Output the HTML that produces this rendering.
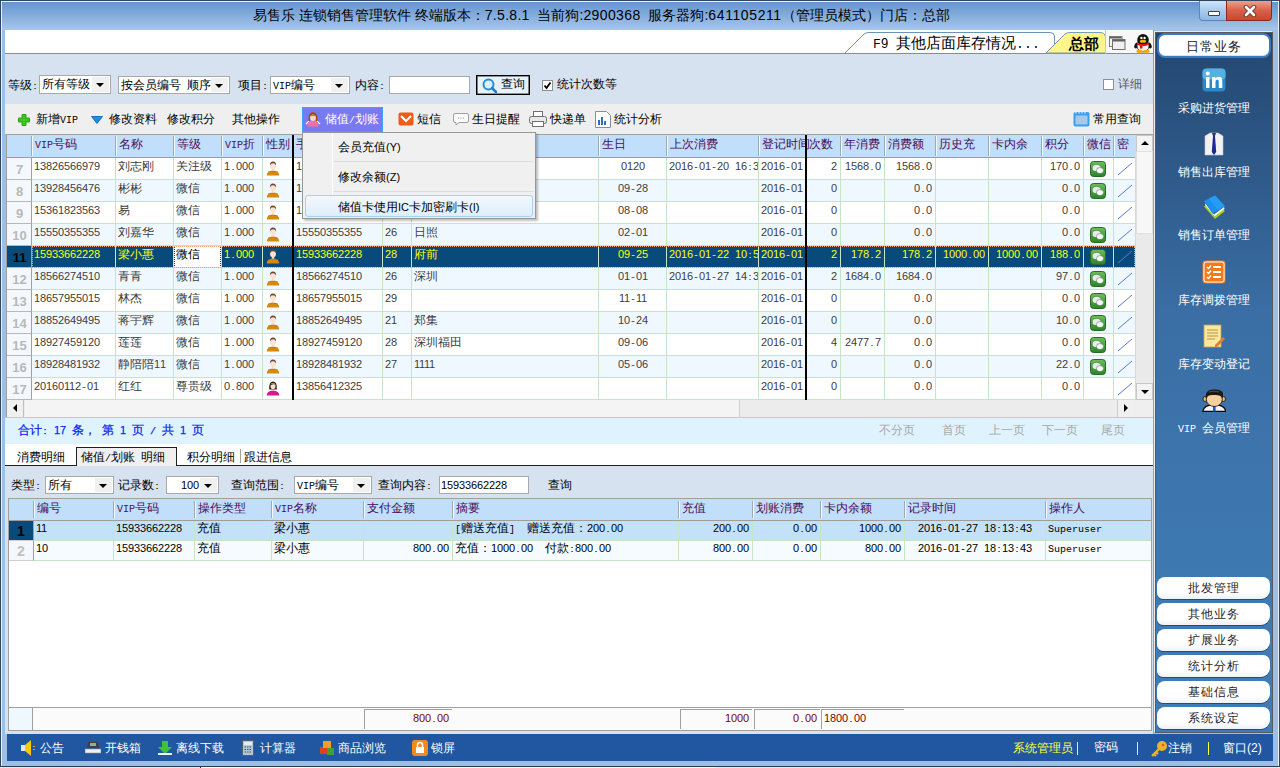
<!DOCTYPE html><html><head><meta charset="utf-8"><style>
@font-face{font-family:"SM";src:local("Liberation Mono");unicode-range:U+0000-002F,U+003A-00FF;size-adjust:83.4%;}
@font-face{font-family:"SM";src:local("Liberation Sans");unicode-range:U+0030-0039;size-adjust:89.9%;}
*{margin:0;padding:0;box-sizing:border-box}
html,body{width:1280px;height:768px;overflow:hidden;background:#9dc0e6}
body{position:relative;font-family:"SM","Liberation Sans",sans-serif;font-size:12px;color:#000}
div{position:absolute}
.t{white-space:nowrap;line-height:14px;height:14px}
.sans{font-family:"Liberation Sans",sans-serif}
</style></head><body><div style="left:0;top:0;width:1280px;height:768px;background:#9dbfe5;border:1px solid #2f4560"></div>
<div style="left:1px;top:1px;width:1278px;height:766px;border:1px solid #e8f0fa;border-bottom-color:#c8dcf0"></div>
<div style="left:2px;top:2px;width:1276px;height:28px;background:linear-gradient(#6495cf,#a7c6ea)"></div>
<div class="t" style="left:253px;top:7px;font-family:'Liberation Sans',sans-serif;font-size:14px;line-height:16px;height:16px;color:#000">易售乐 连锁销售管理软件 终端版本：<span style="letter-spacing:.3px">7.5.8.1</span>&nbsp;&nbsp;当前狗:<span style="letter-spacing:.4px">2900368</span>&nbsp;&nbsp;服务器狗:<span style="letter-spacing:.6px">641105211</span>（管理员模式）门店：总部</div>
<div style="left:1199px;top:1px;width:28px;height:20px;background:linear-gradient(#cfe3f8,#a9cbee 50%,#8fb8e6);border:1px solid #5f86b4;border-top:none;border-radius:0 0 0 4px"><div style="left:8px;top:10px;width:12px;height:5px;background:#fff;border:1px solid #404040;border-radius:1px"></div></div>
<div style="left:1226px;top:1px;width:46px;height:20px;background:linear-gradient(#e9a28f,#d8604a 50%,#c94830);border:1px solid #8b2a1c;border-top:none;border-radius:0 0 4px 0"><svg style="position:absolute;left:16px;top:4px" width="14" height="12" viewBox="0 0 14 12"><path d="M3 2 L11 10 M11 2 L3 10" stroke="#5a2a20" stroke-width="4.4" stroke-linecap="round"/><path d="M3 2 L11 10 M11 2 L3 10" stroke="#fff" stroke-width="2.8" stroke-linecap="round"/></svg></div>
<div style="left:5px;top:30px;width:1149px;height:24px;background:#fff;border-bottom:1px solid #8c8c8c"></div>
<svg style="position:absolute;left:840px;top:30px" width="320" height="24" viewBox="0 0 320 24">
<path d="M5 23 L24 4 Q26 2.5 29 2.5 L210 2.5 Q214 2.5 214.5 6 L214.5 23" fill="#fff" stroke="#6c93b6" stroke-width="1"/>
<path d="M206 23 L225 4 Q227 2.5 230 2.5 L260 2.5 Q265 2.5 265.5 7 L265.5 23 Z" fill="#fff689" stroke="#7a9ab8" stroke-width="1"/>
<line x1="265.5" y1="0" x2="265.5" y2="23" stroke="#d0d0d0"/>
<line x1="313.5" y1="0" x2="313.5" y2="23" stroke="#a0a0a0"/>
</svg>
<div class="t" style="left:873px;top:38px;font-size:15px;line-height:14px">F9 其他店面库存情况...</div>
<div class="t" style="left:1069px;top:37px;font-family:'Liberation Sans',sans-serif;font-size:15px;line-height:14px;"><b>总部</b></div>
<div style="left:1105px;top:30px;width:49px;height:24px;background:#f8f8f8;border-right:1px solid #909090;border-left:1px solid #b8c8d8;border-bottom:1px solid #8c8c8c"></div>
<svg style="position:absolute;left:1108px;top:35px" width="18" height="16" viewBox="0 0 18 16">
<rect x="1.5" y="1.5" width="12.5" height="10" fill="#f6f6f6" stroke="#7a7a7a" stroke-width="1"/>
<rect x="4.5" y="4.5" width="12.5" height="10" fill="#f0f0f0" stroke="#707070" stroke-width="1"/>
<rect x="5" y="5" width="12" height="1.5" fill="#606060"/>
<rect x="2" y="2" width="11.5" height="1.5" fill="#606060"/>
</svg>
<svg style="position:absolute;left:1133px;top:33px" width="20" height="20" viewBox="0 0 20 20">
<ellipse cx="3.5" cy="12.5" rx="2" ry="3" fill="#111" transform="rotate(25 3.5 12.5)"/>
<ellipse cx="16.5" cy="12.5" rx="2" ry="3" fill="#111" transform="rotate(-25 16.5 12.5)"/>
<ellipse cx="10" cy="13" rx="6" ry="6" fill="#f4f4f4" stroke="#202020" stroke-width=".8"/>
<ellipse cx="10" cy="7" rx="5.8" ry="6" fill="#111"/>
<circle cx="8.4" cy="5" r="1.2" fill="#fff"/><circle cx="11.6" cy="5" r="1.2" fill="#fff"/>
<ellipse cx="10" cy="8.2" rx="3.2" ry="1.5" fill="#f8b800"/>
<path d="M3.8 9.5 Q10 12.5 16.2 9.5 L16.2 11.5 Q10 14.5 3.8 11.5Z" fill="#e81010"/>
<rect x="7" y="11.5" width="2.5" height="4" fill="#e81010"/>
<ellipse cx="6.5" cy="18.3" rx="3.2" ry="1.6" fill="#f0a800"/>
<ellipse cx="13.5" cy="18.3" rx="3.2" ry="1.6" fill="#f0a800"/>
</svg>
<div style="left:5px;top:54px;width:1149px;height:50px;background:#d6e2f0"></div>
<div style="left:5px;top:104px;width:1149px;height:30px;background:#efefef"></div>
<div class="t" style="left:8px;top:80px;">等级:</div>
<div style="left:39px;top:75px;width:72px;height:19px;background:#fff;border:1px solid #a9a9a9"></div>
<div style="left:92px;top:77px;width:17px;height:15px;background:#f0f0f0"><div style="left:4px;top:6px;width:0;height:0;border-left:4px solid transparent;border-right:4px solid transparent;border-top:4px solid #000"></div></div>
<div class="t" style="left:42px;top:79px;">所有等级</div>
<div style="left:118px;top:76px;width:112px;height:18px;background:#fff;border:1px solid #a9a9a9"></div>
<div style="left:211px;top:78px;width:17px;height:14px;background:#f0f0f0"><div style="left:4px;top:6px;width:0;height:0;border-left:4px solid transparent;border-right:4px solid transparent;border-top:4px solid #000"></div></div>
<div class="t" style="left:121px;top:80px;">按会员编号 顺序</div>
<div class="t" style="left:238px;top:80px;">项目:</div>
<div style="left:270px;top:76px;width:80px;height:18px;background:#fff;border:1px solid #a9a9a9"></div>
<div style="left:331px;top:78px;width:17px;height:14px;background:#f0f0f0"><div style="left:4px;top:6px;width:0;height:0;border-left:4px solid transparent;border-right:4px solid transparent;border-top:4px solid #000"></div></div>
<div class="t" style="left:273px;top:80px;">VIP编号</div>
<div class="t" style="left:355px;top:80px;">内容:</div>
<div style="left:389px;top:76px;width:81px;height:18px;background:#fff;border:1px solid #a9a9a9"></div>
<div style="left:476px;top:75px;width:54px;height:20px;background:#e6f3fc;border:1px solid #000;box-shadow:inset 0 0 0 .6px #303030"><svg style="position:absolute;left:5px;top:2px" width="16" height="16" viewBox="0 0 16 16"><circle cx="6.5" cy="6.5" r="5" fill="#d8f0fc" stroke="#2a8ed0" stroke-width="2"/><path d="M10 10 L14 14" stroke="#2a7ec0" stroke-width="2.5" stroke-linecap="round"/></svg></div>
<div class="t" style="left:501px;top:79px;">查询</div>
<div style="left:542px;top:80px;width:11px;height:11px;background:#fff;border:1px solid #8f8f8f"><svg style="position:absolute;left:0px;top:0px" width="9" height="9" viewBox="0 0 9 9"><path d="M1.5 4.5 L3.5 7 L7.5 1.5" stroke="#000" stroke-width="1.8" fill="none"/></svg></div>
<div class="t" style="left:557px;top:79px;">统计次数等</div>
<div style="left:1103px;top:79px;width:11px;height:11px;background:#fff;border:1px solid #8f8f8f"></div>
<div class="t" style="left:1118px;top:79px;color:#555">详细</div>
<svg style="position:absolute;left:18px;top:114px" width="12" height="12" viewBox="0 0 12 12"><path d="M4 0.5h4v3.5h3.5v4h-3.5v3.5h-4v-3.5h-3.5v-4h3.5z" fill="#3ec81e" stroke="#1c8a10" stroke-width="0.8"/></svg>
<div class="t" style="left:36px;top:114px;">新增VIP</div>
<svg style="position:absolute;left:91px;top:116px" width="12" height="8" viewBox="0 0 12 8"><path d="M0.5 0.5 L11.5 0.5 L6 7.5Z" fill="#1a8ee8" stroke="#0a5aa8" stroke-width="0.8"/></svg>
<div class="t" style="left:109px;top:114px;">修改资料</div>
<div class="t" style="left:167px;top:114px;">修改积分</div>
<div class="t" style="left:232px;top:114px;">其他操作</div>
<div style="left:302px;top:107px;width:81px;height:25px;background:#7a7af0;border:1px solid #3ea2f8"></div>
<svg style="position:absolute;left:305px;top:111px" width="16" height="16" viewBox="0 0 16 16">
<path d="M1 13 L4.5 9.5 M15 13 L11.5 9.5" stroke="#fff" stroke-width="1.2"/>
<path d="M2.5 15.5 Q2 9.5 8 9.5 Q14 9.5 13.5 15.5Z" fill="#f070a0"/>
<path d="M3.5 10 Q3 1.2 8 1.2 Q13 1.2 12.5 10 L11 10 L11 6 Q8 4 5 6 L5 10Z" fill="#9a4a10"/>
<ellipse cx="8" cy="6.8" rx="2.9" ry="3.2" fill="#fbd8b8"/>
<path d="M5 5.2 Q8 2.6 11 5.2 Q8 4.2 5 5.2Z" fill="#9a4a10"/>
</svg>
<div class="t" style="left:325px;top:114px;color:#fff">储值/划账</div>
<svg style="position:absolute;left:398px;top:112px" width="16" height="14" viewBox="0 0 16 14"><rect x="0.5" y="0.5" width="15" height="13" rx="2" fill="#f05a1a"/><path d="M3 4 L8 9 L13 4" stroke="#fff" stroke-width="2" fill="none"/></svg>
<div class="t" style="left:417px;top:114px;">短信</div>
<svg style="position:absolute;left:453px;top:112px" width="16" height="14" viewBox="0 0 16 14"><path d="M2 1.5h12q1.5 0 1.5 1.5v6q0 1.5-1.5 1.5h-8l-3 2.5v-2.5h-1q-1.5 0-1.5-1.5v-6q0-1.5 1.5-1.5z" fill="#fafafa" stroke="#a0a0a0"/><circle cx="5.5" cy="6" r=".6" fill="#888"/><circle cx="8" cy="6" r=".6" fill="#888"/><circle cx="10.5" cy="6" r=".6" fill="#888"/></svg>
<div class="t" style="left:472px;top:114px;">生日提醒</div>
<svg style="position:absolute;left:529px;top:111px" width="18" height="16" viewBox="0 0 18 16"><rect x="4.5" y="0.5" width="9" height="5" fill="#fff" stroke="#707070"/><rect x="0.5" y="5.5" width="17" height="7" rx="2" fill="#e8e8e8" stroke="#707070"/><rect x="3.5" y="10.5" width="11" height="5" fill="#fff" stroke="#707070"/></svg>
<div class="t" style="left:550px;top:114px;">快递单</div>
<svg style="position:absolute;left:595px;top:111px" width="16" height="17" viewBox="0 0 16 17"><path d="M0.5 0.5h11l4 4v12h-15z" fill="#fff" stroke="#8090a0"/><rect x="3" y="9" width="2" height="5" fill="#2a70c0"/><rect x="6" y="6" width="2" height="8" fill="#2a70c0"/><rect x="9" y="10" width="2" height="4" fill="#2a70c0"/></svg>
<div class="t" style="left:614px;top:114px;">统计分析</div>
<svg style="position:absolute;left:1073px;top:111px" width="17" height="16" viewBox="0 0 17 16"><rect x="0.5" y="1" width="16" height="14.5" rx="2" fill="#3aa0f0"/><rect x="2.5" y="4.5" width="12" height="9" fill="#a8c8e8"/><path d="M3 0.5v2M6 0.5v2M9 0.5v2M12 0.5v2" stroke="#fff"/></svg>
<div class="t" style="left:1093px;top:114px;">常用查询</div>
<div style="left:6px;top:134px;width:1148px;height:283px;background:#fff;border:1px solid #a0a0a0;border-right:none"></div>
<div style="left:7px;top:135px;width:1128px;height:23px;background:#c1dffa;border-bottom:1px solid #a09c98"></div>
<div style="left:31px;top:136px;width:2px;height:20px;border-left:1px solid #a0a8b0;border-right:1px solid #f4faff"></div>
<div style="left:115px;top:136px;width:2px;height:20px;border-left:1px solid #a0a8b0;border-right:1px solid #f4faff"></div>
<div class="t" style="left:35px;top:139px;color:#4a0c5a">VIP号码</div>
<div style="left:173px;top:136px;width:2px;height:20px;border-left:1px solid #a0a8b0;border-right:1px solid #f4faff"></div>
<div class="t" style="left:119px;top:139px;color:#4a0c5a">名称</div>
<div style="left:221px;top:136px;width:2px;height:20px;border-left:1px solid #a0a8b0;border-right:1px solid #f4faff"></div>
<div class="t" style="left:177px;top:139px;color:#4a0c5a">等级</div>
<div style="left:262px;top:136px;width:2px;height:20px;border-left:1px solid #a0a8b0;border-right:1px solid #f4faff"></div>
<div class="t" style="left:225px;top:139px;color:#4a0c5a">VIP折</div>
<div class="t" style="left:266px;top:139px;color:#4a0c5a">性别</div>
<div style="left:382px;top:136px;width:2px;height:20px;border-left:1px solid #a0a8b0;border-right:1px solid #f4faff"></div>
<div class="t" style="left:296px;top:139px;color:#4a0c5a">手机</div>
<div style="left:411px;top:136px;width:2px;height:20px;border-left:1px solid #a0a8b0;border-right:1px solid #f4faff"></div>
<div class="t" style="left:386px;top:139px;color:#4a0c5a">年龄</div>
<div style="left:598px;top:136px;width:2px;height:20px;border-left:1px solid #a0a8b0;border-right:1px solid #f4faff"></div>
<div class="t" style="left:415px;top:139px;color:#4a0c5a">地址</div>
<div style="left:666px;top:136px;width:2px;height:20px;border-left:1px solid #a0a8b0;border-right:1px solid #f4faff"></div>
<div class="t" style="left:602px;top:139px;color:#4a0c5a">生日</div>
<div style="left:758px;top:136px;width:2px;height:20px;border-left:1px solid #a0a8b0;border-right:1px solid #f4faff"></div>
<div class="t" style="left:670px;top:139px;color:#4a0c5a">上次消费</div>
<div class="t" style="left:762px;top:139px;color:#4a0c5a">登记时间</div>
<div style="left:840px;top:136px;width:2px;height:20px;border-left:1px solid #a0a8b0;border-right:1px solid #f4faff"></div>
<div class="t" style="left:809px;top:139px;color:#4a0c5a">次数</div>
<div style="left:884px;top:136px;width:2px;height:20px;border-left:1px solid #a0a8b0;border-right:1px solid #f4faff"></div>
<div class="t" style="left:844px;top:139px;color:#4a0c5a">年消费</div>
<div style="left:935px;top:136px;width:2px;height:20px;border-left:1px solid #a0a8b0;border-right:1px solid #f4faff"></div>
<div class="t" style="left:888px;top:139px;color:#4a0c5a">消费额</div>
<div style="left:988px;top:136px;width:2px;height:20px;border-left:1px solid #a0a8b0;border-right:1px solid #f4faff"></div>
<div class="t" style="left:939px;top:139px;color:#4a0c5a">历史充</div>
<div style="left:1041px;top:136px;width:2px;height:20px;border-left:1px solid #a0a8b0;border-right:1px solid #f4faff"></div>
<div class="t" style="left:992px;top:139px;color:#4a0c5a">卡内余</div>
<div style="left:1083px;top:136px;width:2px;height:20px;border-left:1px solid #a0a8b0;border-right:1px solid #f4faff"></div>
<div class="t" style="left:1045px;top:139px;color:#4a0c5a">积分</div>
<div style="left:1113px;top:136px;width:2px;height:20px;border-left:1px solid #a0a8b0;border-right:1px solid #f4faff"></div>
<div class="t" style="left:1087px;top:139px;color:#4a0c5a">微信</div>
<div style="left:1135px;top:136px;width:2px;height:20px;border-left:1px solid #a0a8b0;border-right:1px solid #f4faff"></div>
<div class="t" style="left:1117px;top:139px;color:#4a0c5a">密</div>
<div style="left:7px;top:158px;width:25px;height:22px;background:#f4f8fc;border-bottom:1px solid #b8b8b8;border-right:1px solid #a0a0a0"></div>
<div class="t" style="left:7px;top:163px;width:25px;text-align:center;font-family:'Liberation Sans',sans-serif;font-size:13px;line-height:14px;color:#b8b8b8"><b>7</b></div>
<div style="left:32px;top:158px;width:1103px;height:22px;background:#ffffff"></div>
<div style="left:115px;top:158px;width:1px;height:22px;background:#c6e4c6"></div>
<div class="t" style="left:34px;top:161px;width:81px;overflow:hidden;color:#3c3c3c;">13826566979</div>
<div style="left:173px;top:158px;width:1px;height:22px;background:#c6e4c6"></div>
<div class="t" style="left:118px;top:161px;width:55px;overflow:hidden;color:#3c3c3c;">刘志刚</div>
<div style="left:221px;top:158px;width:1px;height:22px;background:#c6e4c6"></div>
<div class="t" style="left:176px;top:161px;width:45px;overflow:hidden;color:#3c3c3c;">关注级</div>
<div style="left:262px;top:158px;width:1px;height:22px;background:#c6e4c6"></div>
<div class="t" style="left:224px;top:161px;width:38px;overflow:hidden;color:#3c3c3c;">1.000</div>
<div style="left:266px;top:160px;width:14px;height:16px"><svg width="14" height="16" viewBox="0 0 14 16"><path d="M0.8 15.6 Q0.6 10.6 7 10.4 Q13.4 10.6 13.2 15.6Z" fill="#d48a0c"/><path d="M2 12 Q7 10.2 12 12" stroke="#b87008" stroke-width=".6" fill="none"/><rect x="5.8" y="8.5" width="2.4" height="2.2" fill="#f2d8c4"/><ellipse cx="7" cy="5.6" rx="3" ry="3.6" fill="#f8e4d4"/><path d="M3.9 5.4 Q3.8 1.6 7 1.6 Q10.2 1.6 10.1 5.4 Q9.2 3.3 7 3.3 Q4.8 3.3 3.9 5.4z" fill="#704830"/></svg></div>
<div style="left:382px;top:158px;width:1px;height:22px;background:#c6e4c6"></div>
<div class="t" style="left:296px;top:161px;width:86px;overflow:hidden;color:#3c3c3c;">1</div>
<div style="left:411px;top:158px;width:1px;height:22px;background:#c6e4c6"></div>
<div style="left:598px;top:158px;width:1px;height:22px;background:#c6e4c6"></div>
<div style="left:666px;top:158px;width:1px;height:22px;background:#c6e4c6"></div>
<div class="t" style="left:599px;top:161px;width:67px;text-align:center;color:#3c3c3c;">0120</div>
<div style="left:758px;top:158px;width:1px;height:22px;background:#c6e4c6"></div>
<div class="t" style="left:669px;top:161px;width:89px;overflow:hidden;color:#3c3c3c;">2016-01-20 16:3</div>
<div class="t" style="left:761px;top:161px;width:44px;overflow:hidden;color:#3c3c3c;">2016-01</div>
<div style="left:840px;top:158px;width:1px;height:22px;background:#c6e4c6"></div>
<div class="t" style="left:808px;top:161px;width:29px;text-align:right;color:#3c3c3c;overflow:hidden">2</div>
<div style="left:884px;top:158px;width:1px;height:22px;background:#c6e4c6"></div>
<div class="t" style="left:842px;top:161px;width:39px;text-align:right;color:#3c3c3c;overflow:hidden">1568.0</div>
<div style="left:935px;top:158px;width:1px;height:22px;background:#c6e4c6"></div>
<div class="t" style="left:886px;top:161px;width:46px;text-align:right;color:#3c3c3c;overflow:hidden">1568.0</div>
<div style="left:988px;top:158px;width:1px;height:22px;background:#c6e4c6"></div>
<div style="left:1041px;top:158px;width:1px;height:22px;background:#c6e4c6"></div>
<div style="left:1083px;top:158px;width:1px;height:22px;background:#c6e4c6"></div>
<div class="t" style="left:1043px;top:161px;width:37px;text-align:right;color:#3c3c3c;overflow:hidden">170.0</div>
<div style="left:1113px;top:158px;width:1px;height:22px;background:#c6e4c6"></div>
<div style="left:1090px;top:161px;width:16px;height:16px"><svg width="16" height="16" viewBox="0 0 16 16"><defs><linearGradient id="wg" x1="0" y1="0" x2="0" y2="1"><stop offset="0" stop-color="#6cc05c"/><stop offset="1" stop-color="#2a8428"/></linearGradient></defs><rect x=".5" y=".5" width="15" height="15" rx="3" fill="url(#wg)" stroke="#2a6a26" stroke-width="1"/><ellipse cx="6.6" cy="7" rx="4.4" ry="3.6" fill="#e8ece8" stroke="#3a6a38" stroke-width=".5"/><ellipse cx="10" cy="9.6" rx="3.6" ry="3" fill="#f8f8f8" stroke="#3a6a38" stroke-width=".5"/></svg></div>
<div style="left:1135px;top:158px;width:1px;height:22px;background:#c6e4c6"></div>
<svg style="position:absolute;left:1117px;top:162px" width="16" height="14"><path d="M1 13 L15 1" stroke="#5a7ad8" stroke-width="1"/></svg>
<div style="left:32px;top:179px;width:1103px;height:1px;background:#c6e4c6"></div>
<div style="left:7px;top:180px;width:25px;height:22px;background:#f4f8fc;border-bottom:1px solid #b8b8b8;border-right:1px solid #a0a0a0"></div>
<div class="t" style="left:7px;top:185px;width:25px;text-align:center;font-family:'Liberation Sans',sans-serif;font-size:13px;line-height:14px;color:#b8b8b8"><b>8</b></div>
<div style="left:32px;top:180px;width:1103px;height:22px;background:#f0f8ff"></div>
<div style="left:115px;top:180px;width:1px;height:22px;background:#c6e4c6"></div>
<div class="t" style="left:34px;top:183px;width:81px;overflow:hidden;color:#3c3c3c;">13928456476</div>
<div style="left:173px;top:180px;width:1px;height:22px;background:#c6e4c6"></div>
<div class="t" style="left:118px;top:183px;width:55px;overflow:hidden;color:#3c3c3c;">彬彬</div>
<div style="left:221px;top:180px;width:1px;height:22px;background:#c6e4c6"></div>
<div class="t" style="left:176px;top:183px;width:45px;overflow:hidden;color:#3c3c3c;">微信</div>
<div style="left:262px;top:180px;width:1px;height:22px;background:#c6e4c6"></div>
<div class="t" style="left:224px;top:183px;width:38px;overflow:hidden;color:#3c3c3c;">1.000</div>
<div style="left:266px;top:182px;width:14px;height:16px"><svg width="14" height="16" viewBox="0 0 14 16"><path d="M0.8 15.6 Q0.6 10.6 7 10.4 Q13.4 10.6 13.2 15.6Z" fill="#d48a0c"/><path d="M2 12 Q7 10.2 12 12" stroke="#b87008" stroke-width=".6" fill="none"/><rect x="5.8" y="8.5" width="2.4" height="2.2" fill="#f2d8c4"/><ellipse cx="7" cy="5.6" rx="3" ry="3.6" fill="#f8e4d4"/><path d="M3.9 5.4 Q3.8 1.6 7 1.6 Q10.2 1.6 10.1 5.4 Q9.2 3.3 7 3.3 Q4.8 3.3 3.9 5.4z" fill="#704830"/></svg></div>
<div style="left:382px;top:180px;width:1px;height:22px;background:#c6e4c6"></div>
<div class="t" style="left:296px;top:183px;width:86px;overflow:hidden;color:#3c3c3c;">1</div>
<div style="left:411px;top:180px;width:1px;height:22px;background:#c6e4c6"></div>
<div style="left:598px;top:180px;width:1px;height:22px;background:#c6e4c6"></div>
<div style="left:666px;top:180px;width:1px;height:22px;background:#c6e4c6"></div>
<div class="t" style="left:599px;top:183px;width:67px;text-align:center;color:#3c3c3c;">09-28</div>
<div style="left:758px;top:180px;width:1px;height:22px;background:#c6e4c6"></div>
<div class="t" style="left:761px;top:183px;width:44px;overflow:hidden;color:#3c3c3c;">2016-01</div>
<div style="left:840px;top:180px;width:1px;height:22px;background:#c6e4c6"></div>
<div class="t" style="left:808px;top:183px;width:29px;text-align:right;color:#3c3c3c;overflow:hidden">0</div>
<div style="left:884px;top:180px;width:1px;height:22px;background:#c6e4c6"></div>
<div style="left:935px;top:180px;width:1px;height:22px;background:#c6e4c6"></div>
<div class="t" style="left:886px;top:183px;width:46px;text-align:right;color:#3c3c3c;overflow:hidden">0.0</div>
<div style="left:988px;top:180px;width:1px;height:22px;background:#c6e4c6"></div>
<div style="left:1041px;top:180px;width:1px;height:22px;background:#c6e4c6"></div>
<div style="left:1083px;top:180px;width:1px;height:22px;background:#c6e4c6"></div>
<div class="t" style="left:1043px;top:183px;width:37px;text-align:right;color:#3c3c3c;overflow:hidden">0.0</div>
<div style="left:1113px;top:180px;width:1px;height:22px;background:#c6e4c6"></div>
<div style="left:1090px;top:183px;width:16px;height:16px"><svg width="16" height="16" viewBox="0 0 16 16"><defs><linearGradient id="wg" x1="0" y1="0" x2="0" y2="1"><stop offset="0" stop-color="#6cc05c"/><stop offset="1" stop-color="#2a8428"/></linearGradient></defs><rect x=".5" y=".5" width="15" height="15" rx="3" fill="url(#wg)" stroke="#2a6a26" stroke-width="1"/><ellipse cx="6.6" cy="7" rx="4.4" ry="3.6" fill="#e8ece8" stroke="#3a6a38" stroke-width=".5"/><ellipse cx="10" cy="9.6" rx="3.6" ry="3" fill="#f8f8f8" stroke="#3a6a38" stroke-width=".5"/></svg></div>
<div style="left:1135px;top:180px;width:1px;height:22px;background:#c6e4c6"></div>
<svg style="position:absolute;left:1117px;top:184px" width="16" height="14"><path d="M1 13 L15 1" stroke="#5a7ad8" stroke-width="1"/></svg>
<div style="left:32px;top:201px;width:1103px;height:1px;background:#c6e4c6"></div>
<div style="left:7px;top:202px;width:25px;height:22px;background:#f4f8fc;border-bottom:1px solid #b8b8b8;border-right:1px solid #a0a0a0"></div>
<div class="t" style="left:7px;top:207px;width:25px;text-align:center;font-family:'Liberation Sans',sans-serif;font-size:13px;line-height:14px;color:#b8b8b8"><b>9</b></div>
<div style="left:32px;top:202px;width:1103px;height:22px;background:#ffffff"></div>
<div style="left:115px;top:202px;width:1px;height:22px;background:#c6e4c6"></div>
<div class="t" style="left:34px;top:205px;width:81px;overflow:hidden;color:#3c3c3c;">15361823563</div>
<div style="left:173px;top:202px;width:1px;height:22px;background:#c6e4c6"></div>
<div class="t" style="left:118px;top:205px;width:55px;overflow:hidden;color:#3c3c3c;">易</div>
<div style="left:221px;top:202px;width:1px;height:22px;background:#c6e4c6"></div>
<div class="t" style="left:176px;top:205px;width:45px;overflow:hidden;color:#3c3c3c;">微信</div>
<div style="left:262px;top:202px;width:1px;height:22px;background:#c6e4c6"></div>
<div class="t" style="left:224px;top:205px;width:38px;overflow:hidden;color:#3c3c3c;">1.000</div>
<div style="left:266px;top:204px;width:14px;height:16px"><svg width="14" height="16" viewBox="0 0 14 16"><path d="M0.8 15.6 Q0.6 10.6 7 10.4 Q13.4 10.6 13.2 15.6Z" fill="#d48a0c"/><path d="M2 12 Q7 10.2 12 12" stroke="#b87008" stroke-width=".6" fill="none"/><rect x="5.8" y="8.5" width="2.4" height="2.2" fill="#f2d8c4"/><ellipse cx="7" cy="5.6" rx="3" ry="3.6" fill="#f8e4d4"/><path d="M3.9 5.4 Q3.8 1.6 7 1.6 Q10.2 1.6 10.1 5.4 Q9.2 3.3 7 3.3 Q4.8 3.3 3.9 5.4z" fill="#704830"/></svg></div>
<div style="left:382px;top:202px;width:1px;height:22px;background:#c6e4c6"></div>
<div class="t" style="left:296px;top:205px;width:86px;overflow:hidden;color:#3c3c3c;">1</div>
<div style="left:411px;top:202px;width:1px;height:22px;background:#c6e4c6"></div>
<div style="left:598px;top:202px;width:1px;height:22px;background:#c6e4c6"></div>
<div style="left:666px;top:202px;width:1px;height:22px;background:#c6e4c6"></div>
<div class="t" style="left:599px;top:205px;width:67px;text-align:center;color:#3c3c3c;">08-08</div>
<div style="left:758px;top:202px;width:1px;height:22px;background:#c6e4c6"></div>
<div class="t" style="left:761px;top:205px;width:44px;overflow:hidden;color:#3c3c3c;">2016-01</div>
<div style="left:840px;top:202px;width:1px;height:22px;background:#c6e4c6"></div>
<div class="t" style="left:808px;top:205px;width:29px;text-align:right;color:#3c3c3c;overflow:hidden">0</div>
<div style="left:884px;top:202px;width:1px;height:22px;background:#c6e4c6"></div>
<div style="left:935px;top:202px;width:1px;height:22px;background:#c6e4c6"></div>
<div class="t" style="left:886px;top:205px;width:46px;text-align:right;color:#3c3c3c;overflow:hidden">0.0</div>
<div style="left:988px;top:202px;width:1px;height:22px;background:#c6e4c6"></div>
<div style="left:1041px;top:202px;width:1px;height:22px;background:#c6e4c6"></div>
<div style="left:1083px;top:202px;width:1px;height:22px;background:#c6e4c6"></div>
<div class="t" style="left:1043px;top:205px;width:37px;text-align:right;color:#3c3c3c;overflow:hidden">0.0</div>
<div style="left:1113px;top:202px;width:1px;height:22px;background:#c6e4c6"></div>
<div style="left:1135px;top:202px;width:1px;height:22px;background:#c6e4c6"></div>
<svg style="position:absolute;left:1117px;top:206px" width="16" height="14"><path d="M1 13 L15 1" stroke="#5a7ad8" stroke-width="1"/></svg>
<div style="left:32px;top:223px;width:1103px;height:1px;background:#c6e4c6"></div>
<div style="left:7px;top:224px;width:25px;height:22px;background:#f4f8fc;border-bottom:1px solid #b8b8b8;border-right:1px solid #a0a0a0"></div>
<div class="t" style="left:7px;top:229px;width:25px;text-align:center;font-family:'Liberation Sans',sans-serif;font-size:13px;line-height:14px;color:#b8b8b8"><b>10</b></div>
<div style="left:32px;top:224px;width:1103px;height:22px;background:#f0f8ff"></div>
<div style="left:115px;top:224px;width:1px;height:22px;background:#c6e4c6"></div>
<div class="t" style="left:34px;top:227px;width:81px;overflow:hidden;color:#3c3c3c;">15550355355</div>
<div style="left:173px;top:224px;width:1px;height:22px;background:#c6e4c6"></div>
<div class="t" style="left:118px;top:227px;width:55px;overflow:hidden;color:#3c3c3c;">刘嘉华</div>
<div style="left:221px;top:224px;width:1px;height:22px;background:#c6e4c6"></div>
<div class="t" style="left:176px;top:227px;width:45px;overflow:hidden;color:#3c3c3c;">微信</div>
<div style="left:262px;top:224px;width:1px;height:22px;background:#c6e4c6"></div>
<div class="t" style="left:224px;top:227px;width:38px;overflow:hidden;color:#3c3c3c;">1.000</div>
<div style="left:266px;top:226px;width:14px;height:16px"><svg width="14" height="16" viewBox="0 0 14 16"><path d="M0.8 15.6 Q0.6 10.6 7 10.4 Q13.4 10.6 13.2 15.6Z" fill="#d48a0c"/><path d="M2 12 Q7 10.2 12 12" stroke="#b87008" stroke-width=".6" fill="none"/><rect x="5.8" y="8.5" width="2.4" height="2.2" fill="#f2d8c4"/><ellipse cx="7" cy="5.6" rx="3" ry="3.6" fill="#f8e4d4"/><path d="M3.9 5.4 Q3.8 1.6 7 1.6 Q10.2 1.6 10.1 5.4 Q9.2 3.3 7 3.3 Q4.8 3.3 3.9 5.4z" fill="#704830"/></svg></div>
<div style="left:382px;top:224px;width:1px;height:22px;background:#c6e4c6"></div>
<div class="t" style="left:296px;top:227px;width:86px;overflow:hidden;color:#3c3c3c;">15550355355</div>
<div style="left:411px;top:224px;width:1px;height:22px;background:#c6e4c6"></div>
<div class="t" style="left:385px;top:227px;width:26px;overflow:hidden;color:#3c3c3c;">26</div>
<div style="left:598px;top:224px;width:1px;height:22px;background:#c6e4c6"></div>
<div class="t" style="left:414px;top:227px;width:184px;overflow:hidden;color:#3c3c3c;">日照</div>
<div style="left:666px;top:224px;width:1px;height:22px;background:#c6e4c6"></div>
<div class="t" style="left:599px;top:227px;width:67px;text-align:center;color:#3c3c3c;">02-01</div>
<div style="left:758px;top:224px;width:1px;height:22px;background:#c6e4c6"></div>
<div class="t" style="left:761px;top:227px;width:44px;overflow:hidden;color:#3c3c3c;">2016-01</div>
<div style="left:840px;top:224px;width:1px;height:22px;background:#c6e4c6"></div>
<div class="t" style="left:808px;top:227px;width:29px;text-align:right;color:#3c3c3c;overflow:hidden">0</div>
<div style="left:884px;top:224px;width:1px;height:22px;background:#c6e4c6"></div>
<div style="left:935px;top:224px;width:1px;height:22px;background:#c6e4c6"></div>
<div class="t" style="left:886px;top:227px;width:46px;text-align:right;color:#3c3c3c;overflow:hidden">0.0</div>
<div style="left:988px;top:224px;width:1px;height:22px;background:#c6e4c6"></div>
<div style="left:1041px;top:224px;width:1px;height:22px;background:#c6e4c6"></div>
<div style="left:1083px;top:224px;width:1px;height:22px;background:#c6e4c6"></div>
<div class="t" style="left:1043px;top:227px;width:37px;text-align:right;color:#3c3c3c;overflow:hidden">0.0</div>
<div style="left:1113px;top:224px;width:1px;height:22px;background:#c6e4c6"></div>
<div style="left:1090px;top:227px;width:16px;height:16px"><svg width="16" height="16" viewBox="0 0 16 16"><defs><linearGradient id="wg" x1="0" y1="0" x2="0" y2="1"><stop offset="0" stop-color="#6cc05c"/><stop offset="1" stop-color="#2a8428"/></linearGradient></defs><rect x=".5" y=".5" width="15" height="15" rx="3" fill="url(#wg)" stroke="#2a6a26" stroke-width="1"/><ellipse cx="6.6" cy="7" rx="4.4" ry="3.6" fill="#e8ece8" stroke="#3a6a38" stroke-width=".5"/><ellipse cx="10" cy="9.6" rx="3.6" ry="3" fill="#f8f8f8" stroke="#3a6a38" stroke-width=".5"/></svg></div>
<div style="left:1135px;top:224px;width:1px;height:22px;background:#c6e4c6"></div>
<svg style="position:absolute;left:1117px;top:228px" width="16" height="14"><path d="M1 13 L15 1" stroke="#5a7ad8" stroke-width="1"/></svg>
<div style="left:32px;top:245px;width:1103px;height:1px;background:#c6e4c6"></div>
<div style="left:7px;top:246px;width:25px;height:22px;background:#084b7a;border-bottom:1px solid #b8b8b8;border-right:1px solid #a0a0a0"></div>
<div class="t" style="left:7px;top:251px;width:25px;text-align:center;font-family:'Liberation Sans',sans-serif;font-size:13px;line-height:14px;color:#000"><b>11</b></div>
<div style="left:32px;top:246px;width:1103px;height:22px;background:#084b7a"></div>
<div style="left:115px;top:246px;width:1px;height:22px;background:#c6e4c6"></div>
<div class="t" style="left:34px;top:249px;width:81px;overflow:hidden;color:#ffff00;">15933662228</div>
<div style="left:173px;top:246px;width:1px;height:22px;background:#c6e4c6"></div>
<div class="t" style="left:118px;top:249px;width:55px;overflow:hidden;color:#ffff00;">梁小惠</div>
<div style="left:174px;top:246px;width:47px;height:22px;background:#fff;border:1px dotted #404040"></div>
<div style="left:221px;top:246px;width:1px;height:22px;background:#c6e4c6"></div>
<div class="t" style="left:176px;top:249px;width:45px;overflow:hidden;color:#000;">微信</div>
<div style="left:262px;top:246px;width:1px;height:22px;background:#c6e4c6"></div>
<div class="t" style="left:224px;top:249px;width:38px;overflow:hidden;color:#ffff00;">1.000</div>
<div style="left:266px;top:248px;width:14px;height:16px"><svg width="14" height="16" viewBox="0 0 14 16"><path d="M0.8 15.6 Q0.6 10.6 7 10.4 Q13.4 10.6 13.2 15.6Z" fill="#d48a0c"/><path d="M2 12 Q7 10.2 12 12" stroke="#b87008" stroke-width=".6" fill="none"/><rect x="5.8" y="8.5" width="2.4" height="2.2" fill="#f2d8c4"/><ellipse cx="7" cy="5.6" rx="3" ry="3.6" fill="#f8e4d4"/><path d="M3.9 5.4 Q3.8 1.6 7 1.6 Q10.2 1.6 10.1 5.4 Q9.2 3.3 7 3.3 Q4.8 3.3 3.9 5.4z" fill="#704830"/></svg></div>
<div style="left:382px;top:246px;width:1px;height:22px;background:#c6e4c6"></div>
<div class="t" style="left:296px;top:249px;width:86px;overflow:hidden;color:#ffff00;">15933662228</div>
<div style="left:411px;top:246px;width:1px;height:22px;background:#c6e4c6"></div>
<div class="t" style="left:385px;top:249px;width:26px;overflow:hidden;color:#ffff00;">28</div>
<div style="left:598px;top:246px;width:1px;height:22px;background:#c6e4c6"></div>
<div class="t" style="left:414px;top:249px;width:184px;overflow:hidden;color:#ffff00;">府前</div>
<div style="left:666px;top:246px;width:1px;height:22px;background:#c6e4c6"></div>
<div class="t" style="left:599px;top:249px;width:67px;text-align:center;color:#ffff00;">09-25</div>
<div style="left:758px;top:246px;width:1px;height:22px;background:#c6e4c6"></div>
<div class="t" style="left:669px;top:249px;width:89px;overflow:hidden;color:#ffff00;">2016-01-22 10:5</div>
<div class="t" style="left:761px;top:249px;width:44px;overflow:hidden;color:#ffff00;">2016-01</div>
<div style="left:840px;top:246px;width:1px;height:22px;background:#c6e4c6"></div>
<div class="t" style="left:808px;top:249px;width:29px;text-align:right;color:#ffff00;overflow:hidden">2</div>
<div style="left:884px;top:246px;width:1px;height:22px;background:#c6e4c6"></div>
<div class="t" style="left:842px;top:249px;width:39px;text-align:right;color:#ffff00;overflow:hidden">178.2</div>
<div style="left:935px;top:246px;width:1px;height:22px;background:#c6e4c6"></div>
<div class="t" style="left:886px;top:249px;width:46px;text-align:right;color:#ffff00;overflow:hidden">178.2</div>
<div style="left:988px;top:246px;width:1px;height:22px;background:#c6e4c6"></div>
<div class="t" style="left:937px;top:249px;width:48px;text-align:right;color:#ffff00;overflow:hidden">1000.00</div>
<div style="left:1041px;top:246px;width:1px;height:22px;background:#c6e4c6"></div>
<div class="t" style="left:990px;top:249px;width:48px;text-align:right;color:#ffff00;overflow:hidden">1000.00</div>
<div style="left:1083px;top:246px;width:1px;height:22px;background:#c6e4c6"></div>
<div class="t" style="left:1043px;top:249px;width:37px;text-align:right;color:#ffff00;overflow:hidden">188.0</div>
<div style="left:1113px;top:246px;width:1px;height:22px;background:#c6e4c6"></div>
<div style="left:1090px;top:249px;width:16px;height:16px"><svg width="16" height="16" viewBox="0 0 16 16"><defs><linearGradient id="wg" x1="0" y1="0" x2="0" y2="1"><stop offset="0" stop-color="#6cc05c"/><stop offset="1" stop-color="#2a8428"/></linearGradient></defs><rect x=".5" y=".5" width="15" height="15" rx="3" fill="url(#wg)" stroke="#2a6a26" stroke-width="1"/><ellipse cx="6.6" cy="7" rx="4.4" ry="3.6" fill="#e8ece8" stroke="#3a6a38" stroke-width=".5"/><ellipse cx="10" cy="9.6" rx="3.6" ry="3" fill="#f8f8f8" stroke="#3a6a38" stroke-width=".5"/></svg></div>
<div style="left:1135px;top:246px;width:1px;height:22px;background:#c6e4c6"></div>
<svg style="position:absolute;left:1117px;top:250px" width="16" height="14"><path d="M1 13 L15 1" stroke="#5a7ad8" stroke-width="1"/></svg>
<div style="left:32px;top:267px;width:1103px;height:1px;background:#c6e4c6"></div>
<div style="left:32px;top:246px;width:1103px;height:22px;border:1px dotted #f0a070"></div>
<div style="left:7px;top:268px;width:25px;height:22px;background:#f4f8fc;border-bottom:1px solid #b8b8b8;border-right:1px solid #a0a0a0"></div>
<div class="t" style="left:7px;top:273px;width:25px;text-align:center;font-family:'Liberation Sans',sans-serif;font-size:13px;line-height:14px;color:#b8b8b8"><b>12</b></div>
<div style="left:32px;top:268px;width:1103px;height:22px;background:#f0f8ff"></div>
<div style="left:115px;top:268px;width:1px;height:22px;background:#c6e4c6"></div>
<div class="t" style="left:34px;top:271px;width:81px;overflow:hidden;color:#3c3c3c;">18566274510</div>
<div style="left:173px;top:268px;width:1px;height:22px;background:#c6e4c6"></div>
<div class="t" style="left:118px;top:271px;width:55px;overflow:hidden;color:#3c3c3c;">青青</div>
<div style="left:221px;top:268px;width:1px;height:22px;background:#c6e4c6"></div>
<div class="t" style="left:176px;top:271px;width:45px;overflow:hidden;color:#3c3c3c;">微信</div>
<div style="left:262px;top:268px;width:1px;height:22px;background:#c6e4c6"></div>
<div class="t" style="left:224px;top:271px;width:38px;overflow:hidden;color:#3c3c3c;">1.000</div>
<div style="left:266px;top:270px;width:14px;height:16px"><svg width="14" height="16" viewBox="0 0 14 16"><path d="M0.8 15.6 Q0.6 10.6 7 10.4 Q13.4 10.6 13.2 15.6Z" fill="#d48a0c"/><path d="M2 12 Q7 10.2 12 12" stroke="#b87008" stroke-width=".6" fill="none"/><rect x="5.8" y="8.5" width="2.4" height="2.2" fill="#f2d8c4"/><ellipse cx="7" cy="5.6" rx="3" ry="3.6" fill="#f8e4d4"/><path d="M3.9 5.4 Q3.8 1.6 7 1.6 Q10.2 1.6 10.1 5.4 Q9.2 3.3 7 3.3 Q4.8 3.3 3.9 5.4z" fill="#704830"/></svg></div>
<div style="left:382px;top:268px;width:1px;height:22px;background:#c6e4c6"></div>
<div class="t" style="left:296px;top:271px;width:86px;overflow:hidden;color:#3c3c3c;">18566274510</div>
<div style="left:411px;top:268px;width:1px;height:22px;background:#c6e4c6"></div>
<div class="t" style="left:385px;top:271px;width:26px;overflow:hidden;color:#3c3c3c;">26</div>
<div style="left:598px;top:268px;width:1px;height:22px;background:#c6e4c6"></div>
<div class="t" style="left:414px;top:271px;width:184px;overflow:hidden;color:#3c3c3c;">深圳</div>
<div style="left:666px;top:268px;width:1px;height:22px;background:#c6e4c6"></div>
<div class="t" style="left:599px;top:271px;width:67px;text-align:center;color:#3c3c3c;">01-01</div>
<div style="left:758px;top:268px;width:1px;height:22px;background:#c6e4c6"></div>
<div class="t" style="left:669px;top:271px;width:89px;overflow:hidden;color:#3c3c3c;">2016-01-27 14:3</div>
<div class="t" style="left:761px;top:271px;width:44px;overflow:hidden;color:#3c3c3c;">2016-01</div>
<div style="left:840px;top:268px;width:1px;height:22px;background:#c6e4c6"></div>
<div class="t" style="left:808px;top:271px;width:29px;text-align:right;color:#3c3c3c;overflow:hidden">2</div>
<div style="left:884px;top:268px;width:1px;height:22px;background:#c6e4c6"></div>
<div class="t" style="left:842px;top:271px;width:39px;text-align:right;color:#3c3c3c;overflow:hidden">1684.0</div>
<div style="left:935px;top:268px;width:1px;height:22px;background:#c6e4c6"></div>
<div class="t" style="left:886px;top:271px;width:46px;text-align:right;color:#3c3c3c;overflow:hidden">1684.0</div>
<div style="left:988px;top:268px;width:1px;height:22px;background:#c6e4c6"></div>
<div style="left:1041px;top:268px;width:1px;height:22px;background:#c6e4c6"></div>
<div style="left:1083px;top:268px;width:1px;height:22px;background:#c6e4c6"></div>
<div class="t" style="left:1043px;top:271px;width:37px;text-align:right;color:#3c3c3c;overflow:hidden">97.0</div>
<div style="left:1113px;top:268px;width:1px;height:22px;background:#c6e4c6"></div>
<div style="left:1090px;top:271px;width:16px;height:16px"><svg width="16" height="16" viewBox="0 0 16 16"><defs><linearGradient id="wg" x1="0" y1="0" x2="0" y2="1"><stop offset="0" stop-color="#6cc05c"/><stop offset="1" stop-color="#2a8428"/></linearGradient></defs><rect x=".5" y=".5" width="15" height="15" rx="3" fill="url(#wg)" stroke="#2a6a26" stroke-width="1"/><ellipse cx="6.6" cy="7" rx="4.4" ry="3.6" fill="#e8ece8" stroke="#3a6a38" stroke-width=".5"/><ellipse cx="10" cy="9.6" rx="3.6" ry="3" fill="#f8f8f8" stroke="#3a6a38" stroke-width=".5"/></svg></div>
<div style="left:1135px;top:268px;width:1px;height:22px;background:#c6e4c6"></div>
<svg style="position:absolute;left:1117px;top:272px" width="16" height="14"><path d="M1 13 L15 1" stroke="#5a7ad8" stroke-width="1"/></svg>
<div style="left:32px;top:289px;width:1103px;height:1px;background:#c6e4c6"></div>
<div style="left:7px;top:290px;width:25px;height:22px;background:#f4f8fc;border-bottom:1px solid #b8b8b8;border-right:1px solid #a0a0a0"></div>
<div class="t" style="left:7px;top:295px;width:25px;text-align:center;font-family:'Liberation Sans',sans-serif;font-size:13px;line-height:14px;color:#b8b8b8"><b>13</b></div>
<div style="left:32px;top:290px;width:1103px;height:22px;background:#ffffff"></div>
<div style="left:115px;top:290px;width:1px;height:22px;background:#c6e4c6"></div>
<div class="t" style="left:34px;top:293px;width:81px;overflow:hidden;color:#3c3c3c;">18657955015</div>
<div style="left:173px;top:290px;width:1px;height:22px;background:#c6e4c6"></div>
<div class="t" style="left:118px;top:293px;width:55px;overflow:hidden;color:#3c3c3c;">林杰</div>
<div style="left:221px;top:290px;width:1px;height:22px;background:#c6e4c6"></div>
<div class="t" style="left:176px;top:293px;width:45px;overflow:hidden;color:#3c3c3c;">微信</div>
<div style="left:262px;top:290px;width:1px;height:22px;background:#c6e4c6"></div>
<div class="t" style="left:224px;top:293px;width:38px;overflow:hidden;color:#3c3c3c;">1.000</div>
<div style="left:266px;top:292px;width:14px;height:16px"><svg width="14" height="16" viewBox="0 0 14 16"><path d="M0.8 15.6 Q0.6 10.6 7 10.4 Q13.4 10.6 13.2 15.6Z" fill="#d48a0c"/><path d="M2 12 Q7 10.2 12 12" stroke="#b87008" stroke-width=".6" fill="none"/><rect x="5.8" y="8.5" width="2.4" height="2.2" fill="#f2d8c4"/><ellipse cx="7" cy="5.6" rx="3" ry="3.6" fill="#f8e4d4"/><path d="M3.9 5.4 Q3.8 1.6 7 1.6 Q10.2 1.6 10.1 5.4 Q9.2 3.3 7 3.3 Q4.8 3.3 3.9 5.4z" fill="#704830"/></svg></div>
<div style="left:382px;top:290px;width:1px;height:22px;background:#c6e4c6"></div>
<div class="t" style="left:296px;top:293px;width:86px;overflow:hidden;color:#3c3c3c;">18657955015</div>
<div style="left:411px;top:290px;width:1px;height:22px;background:#c6e4c6"></div>
<div class="t" style="left:385px;top:293px;width:26px;overflow:hidden;color:#3c3c3c;">29</div>
<div style="left:598px;top:290px;width:1px;height:22px;background:#c6e4c6"></div>
<div style="left:666px;top:290px;width:1px;height:22px;background:#c6e4c6"></div>
<div class="t" style="left:599px;top:293px;width:67px;text-align:center;color:#3c3c3c;">11-11</div>
<div style="left:758px;top:290px;width:1px;height:22px;background:#c6e4c6"></div>
<div class="t" style="left:761px;top:293px;width:44px;overflow:hidden;color:#3c3c3c;">2016-01</div>
<div style="left:840px;top:290px;width:1px;height:22px;background:#c6e4c6"></div>
<div class="t" style="left:808px;top:293px;width:29px;text-align:right;color:#3c3c3c;overflow:hidden">0</div>
<div style="left:884px;top:290px;width:1px;height:22px;background:#c6e4c6"></div>
<div style="left:935px;top:290px;width:1px;height:22px;background:#c6e4c6"></div>
<div class="t" style="left:886px;top:293px;width:46px;text-align:right;color:#3c3c3c;overflow:hidden">0.0</div>
<div style="left:988px;top:290px;width:1px;height:22px;background:#c6e4c6"></div>
<div style="left:1041px;top:290px;width:1px;height:22px;background:#c6e4c6"></div>
<div style="left:1083px;top:290px;width:1px;height:22px;background:#c6e4c6"></div>
<div class="t" style="left:1043px;top:293px;width:37px;text-align:right;color:#3c3c3c;overflow:hidden">0.0</div>
<div style="left:1113px;top:290px;width:1px;height:22px;background:#c6e4c6"></div>
<div style="left:1090px;top:293px;width:16px;height:16px"><svg width="16" height="16" viewBox="0 0 16 16"><defs><linearGradient id="wg" x1="0" y1="0" x2="0" y2="1"><stop offset="0" stop-color="#6cc05c"/><stop offset="1" stop-color="#2a8428"/></linearGradient></defs><rect x=".5" y=".5" width="15" height="15" rx="3" fill="url(#wg)" stroke="#2a6a26" stroke-width="1"/><ellipse cx="6.6" cy="7" rx="4.4" ry="3.6" fill="#e8ece8" stroke="#3a6a38" stroke-width=".5"/><ellipse cx="10" cy="9.6" rx="3.6" ry="3" fill="#f8f8f8" stroke="#3a6a38" stroke-width=".5"/></svg></div>
<div style="left:1135px;top:290px;width:1px;height:22px;background:#c6e4c6"></div>
<svg style="position:absolute;left:1117px;top:294px" width="16" height="14"><path d="M1 13 L15 1" stroke="#5a7ad8" stroke-width="1"/></svg>
<div style="left:32px;top:311px;width:1103px;height:1px;background:#c6e4c6"></div>
<div style="left:7px;top:312px;width:25px;height:22px;background:#f4f8fc;border-bottom:1px solid #b8b8b8;border-right:1px solid #a0a0a0"></div>
<div class="t" style="left:7px;top:317px;width:25px;text-align:center;font-family:'Liberation Sans',sans-serif;font-size:13px;line-height:14px;color:#b8b8b8"><b>14</b></div>
<div style="left:32px;top:312px;width:1103px;height:22px;background:#f0f8ff"></div>
<div style="left:115px;top:312px;width:1px;height:22px;background:#c6e4c6"></div>
<div class="t" style="left:34px;top:315px;width:81px;overflow:hidden;color:#3c3c3c;">18852649495</div>
<div style="left:173px;top:312px;width:1px;height:22px;background:#c6e4c6"></div>
<div class="t" style="left:118px;top:315px;width:55px;overflow:hidden;color:#3c3c3c;">蒋宇辉</div>
<div style="left:221px;top:312px;width:1px;height:22px;background:#c6e4c6"></div>
<div class="t" style="left:176px;top:315px;width:45px;overflow:hidden;color:#3c3c3c;">微信</div>
<div style="left:262px;top:312px;width:1px;height:22px;background:#c6e4c6"></div>
<div class="t" style="left:224px;top:315px;width:38px;overflow:hidden;color:#3c3c3c;">1.000</div>
<div style="left:266px;top:314px;width:14px;height:16px"><svg width="14" height="16" viewBox="0 0 14 16"><path d="M0.8 15.6 Q0.6 10.6 7 10.4 Q13.4 10.6 13.2 15.6Z" fill="#d48a0c"/><path d="M2 12 Q7 10.2 12 12" stroke="#b87008" stroke-width=".6" fill="none"/><rect x="5.8" y="8.5" width="2.4" height="2.2" fill="#f2d8c4"/><ellipse cx="7" cy="5.6" rx="3" ry="3.6" fill="#f8e4d4"/><path d="M3.9 5.4 Q3.8 1.6 7 1.6 Q10.2 1.6 10.1 5.4 Q9.2 3.3 7 3.3 Q4.8 3.3 3.9 5.4z" fill="#704830"/></svg></div>
<div style="left:382px;top:312px;width:1px;height:22px;background:#c6e4c6"></div>
<div class="t" style="left:296px;top:315px;width:86px;overflow:hidden;color:#3c3c3c;">18852649495</div>
<div style="left:411px;top:312px;width:1px;height:22px;background:#c6e4c6"></div>
<div class="t" style="left:385px;top:315px;width:26px;overflow:hidden;color:#3c3c3c;">21</div>
<div style="left:598px;top:312px;width:1px;height:22px;background:#c6e4c6"></div>
<div class="t" style="left:414px;top:315px;width:184px;overflow:hidden;color:#3c3c3c;">郑集</div>
<div style="left:666px;top:312px;width:1px;height:22px;background:#c6e4c6"></div>
<div class="t" style="left:599px;top:315px;width:67px;text-align:center;color:#3c3c3c;">10-24</div>
<div style="left:758px;top:312px;width:1px;height:22px;background:#c6e4c6"></div>
<div class="t" style="left:761px;top:315px;width:44px;overflow:hidden;color:#3c3c3c;">2016-01</div>
<div style="left:840px;top:312px;width:1px;height:22px;background:#c6e4c6"></div>
<div class="t" style="left:808px;top:315px;width:29px;text-align:right;color:#3c3c3c;overflow:hidden">0</div>
<div style="left:884px;top:312px;width:1px;height:22px;background:#c6e4c6"></div>
<div style="left:935px;top:312px;width:1px;height:22px;background:#c6e4c6"></div>
<div class="t" style="left:886px;top:315px;width:46px;text-align:right;color:#3c3c3c;overflow:hidden">0.0</div>
<div style="left:988px;top:312px;width:1px;height:22px;background:#c6e4c6"></div>
<div style="left:1041px;top:312px;width:1px;height:22px;background:#c6e4c6"></div>
<div style="left:1083px;top:312px;width:1px;height:22px;background:#c6e4c6"></div>
<div class="t" style="left:1043px;top:315px;width:37px;text-align:right;color:#3c3c3c;overflow:hidden">10.0</div>
<div style="left:1113px;top:312px;width:1px;height:22px;background:#c6e4c6"></div>
<div style="left:1090px;top:315px;width:16px;height:16px"><svg width="16" height="16" viewBox="0 0 16 16"><defs><linearGradient id="wg" x1="0" y1="0" x2="0" y2="1"><stop offset="0" stop-color="#6cc05c"/><stop offset="1" stop-color="#2a8428"/></linearGradient></defs><rect x=".5" y=".5" width="15" height="15" rx="3" fill="url(#wg)" stroke="#2a6a26" stroke-width="1"/><ellipse cx="6.6" cy="7" rx="4.4" ry="3.6" fill="#e8ece8" stroke="#3a6a38" stroke-width=".5"/><ellipse cx="10" cy="9.6" rx="3.6" ry="3" fill="#f8f8f8" stroke="#3a6a38" stroke-width=".5"/></svg></div>
<div style="left:1135px;top:312px;width:1px;height:22px;background:#c6e4c6"></div>
<svg style="position:absolute;left:1117px;top:316px" width="16" height="14"><path d="M1 13 L15 1" stroke="#5a7ad8" stroke-width="1"/></svg>
<div style="left:32px;top:333px;width:1103px;height:1px;background:#c6e4c6"></div>
<div style="left:7px;top:334px;width:25px;height:22px;background:#f4f8fc;border-bottom:1px solid #b8b8b8;border-right:1px solid #a0a0a0"></div>
<div class="t" style="left:7px;top:339px;width:25px;text-align:center;font-family:'Liberation Sans',sans-serif;font-size:13px;line-height:14px;color:#b8b8b8"><b>15</b></div>
<div style="left:32px;top:334px;width:1103px;height:22px;background:#ffffff"></div>
<div style="left:115px;top:334px;width:1px;height:22px;background:#c6e4c6"></div>
<div class="t" style="left:34px;top:337px;width:81px;overflow:hidden;color:#3c3c3c;">18927459120</div>
<div style="left:173px;top:334px;width:1px;height:22px;background:#c6e4c6"></div>
<div class="t" style="left:118px;top:337px;width:55px;overflow:hidden;color:#3c3c3c;">莲莲</div>
<div style="left:221px;top:334px;width:1px;height:22px;background:#c6e4c6"></div>
<div class="t" style="left:176px;top:337px;width:45px;overflow:hidden;color:#3c3c3c;">微信</div>
<div style="left:262px;top:334px;width:1px;height:22px;background:#c6e4c6"></div>
<div class="t" style="left:224px;top:337px;width:38px;overflow:hidden;color:#3c3c3c;">1.000</div>
<div style="left:266px;top:336px;width:14px;height:16px"><svg width="14" height="16" viewBox="0 0 14 16"><path d="M0.8 15.6 Q0.6 10.6 7 10.4 Q13.4 10.6 13.2 15.6Z" fill="#d48a0c"/><path d="M2 12 Q7 10.2 12 12" stroke="#b87008" stroke-width=".6" fill="none"/><rect x="5.8" y="8.5" width="2.4" height="2.2" fill="#f2d8c4"/><ellipse cx="7" cy="5.6" rx="3" ry="3.6" fill="#f8e4d4"/><path d="M3.9 5.4 Q3.8 1.6 7 1.6 Q10.2 1.6 10.1 5.4 Q9.2 3.3 7 3.3 Q4.8 3.3 3.9 5.4z" fill="#704830"/></svg></div>
<div style="left:382px;top:334px;width:1px;height:22px;background:#c6e4c6"></div>
<div class="t" style="left:296px;top:337px;width:86px;overflow:hidden;color:#3c3c3c;">18927459120</div>
<div style="left:411px;top:334px;width:1px;height:22px;background:#c6e4c6"></div>
<div class="t" style="left:385px;top:337px;width:26px;overflow:hidden;color:#3c3c3c;">28</div>
<div style="left:598px;top:334px;width:1px;height:22px;background:#c6e4c6"></div>
<div class="t" style="left:414px;top:337px;width:184px;overflow:hidden;color:#3c3c3c;">深圳福田</div>
<div style="left:666px;top:334px;width:1px;height:22px;background:#c6e4c6"></div>
<div class="t" style="left:599px;top:337px;width:67px;text-align:center;color:#3c3c3c;">09-06</div>
<div style="left:758px;top:334px;width:1px;height:22px;background:#c6e4c6"></div>
<div class="t" style="left:761px;top:337px;width:44px;overflow:hidden;color:#3c3c3c;">2016-01</div>
<div style="left:840px;top:334px;width:1px;height:22px;background:#c6e4c6"></div>
<div class="t" style="left:808px;top:337px;width:29px;text-align:right;color:#3c3c3c;overflow:hidden">4</div>
<div style="left:884px;top:334px;width:1px;height:22px;background:#c6e4c6"></div>
<div class="t" style="left:842px;top:337px;width:39px;text-align:right;color:#3c3c3c;overflow:hidden">2477.7</div>
<div style="left:935px;top:334px;width:1px;height:22px;background:#c6e4c6"></div>
<div class="t" style="left:886px;top:337px;width:46px;text-align:right;color:#3c3c3c;overflow:hidden">0.0</div>
<div style="left:988px;top:334px;width:1px;height:22px;background:#c6e4c6"></div>
<div style="left:1041px;top:334px;width:1px;height:22px;background:#c6e4c6"></div>
<div style="left:1083px;top:334px;width:1px;height:22px;background:#c6e4c6"></div>
<div class="t" style="left:1043px;top:337px;width:37px;text-align:right;color:#3c3c3c;overflow:hidden">0.0</div>
<div style="left:1113px;top:334px;width:1px;height:22px;background:#c6e4c6"></div>
<div style="left:1090px;top:337px;width:16px;height:16px"><svg width="16" height="16" viewBox="0 0 16 16"><defs><linearGradient id="wg" x1="0" y1="0" x2="0" y2="1"><stop offset="0" stop-color="#6cc05c"/><stop offset="1" stop-color="#2a8428"/></linearGradient></defs><rect x=".5" y=".5" width="15" height="15" rx="3" fill="url(#wg)" stroke="#2a6a26" stroke-width="1"/><ellipse cx="6.6" cy="7" rx="4.4" ry="3.6" fill="#e8ece8" stroke="#3a6a38" stroke-width=".5"/><ellipse cx="10" cy="9.6" rx="3.6" ry="3" fill="#f8f8f8" stroke="#3a6a38" stroke-width=".5"/></svg></div>
<div style="left:1135px;top:334px;width:1px;height:22px;background:#c6e4c6"></div>
<svg style="position:absolute;left:1117px;top:338px" width="16" height="14"><path d="M1 13 L15 1" stroke="#5a7ad8" stroke-width="1"/></svg>
<div style="left:32px;top:355px;width:1103px;height:1px;background:#c6e4c6"></div>
<div style="left:7px;top:356px;width:25px;height:22px;background:#f4f8fc;border-bottom:1px solid #b8b8b8;border-right:1px solid #a0a0a0"></div>
<div class="t" style="left:7px;top:361px;width:25px;text-align:center;font-family:'Liberation Sans',sans-serif;font-size:13px;line-height:14px;color:#b8b8b8"><b>16</b></div>
<div style="left:32px;top:356px;width:1103px;height:22px;background:#f0f8ff"></div>
<div style="left:115px;top:356px;width:1px;height:22px;background:#c6e4c6"></div>
<div class="t" style="left:34px;top:359px;width:81px;overflow:hidden;color:#3c3c3c;">18928481932</div>
<div style="left:173px;top:356px;width:1px;height:22px;background:#c6e4c6"></div>
<div class="t" style="left:118px;top:359px;width:55px;overflow:hidden;color:#3c3c3c;">静陪陪11</div>
<div style="left:221px;top:356px;width:1px;height:22px;background:#c6e4c6"></div>
<div class="t" style="left:176px;top:359px;width:45px;overflow:hidden;color:#3c3c3c;">微信</div>
<div style="left:262px;top:356px;width:1px;height:22px;background:#c6e4c6"></div>
<div class="t" style="left:224px;top:359px;width:38px;overflow:hidden;color:#3c3c3c;">1.000</div>
<div style="left:266px;top:358px;width:14px;height:16px"><svg width="14" height="16" viewBox="0 0 14 16"><path d="M0.8 15.6 Q0.6 10.6 7 10.4 Q13.4 10.6 13.2 15.6Z" fill="#d48a0c"/><path d="M2 12 Q7 10.2 12 12" stroke="#b87008" stroke-width=".6" fill="none"/><rect x="5.8" y="8.5" width="2.4" height="2.2" fill="#f2d8c4"/><ellipse cx="7" cy="5.6" rx="3" ry="3.6" fill="#f8e4d4"/><path d="M3.9 5.4 Q3.8 1.6 7 1.6 Q10.2 1.6 10.1 5.4 Q9.2 3.3 7 3.3 Q4.8 3.3 3.9 5.4z" fill="#704830"/></svg></div>
<div style="left:382px;top:356px;width:1px;height:22px;background:#c6e4c6"></div>
<div class="t" style="left:296px;top:359px;width:86px;overflow:hidden;color:#3c3c3c;">18928481932</div>
<div style="left:411px;top:356px;width:1px;height:22px;background:#c6e4c6"></div>
<div class="t" style="left:385px;top:359px;width:26px;overflow:hidden;color:#3c3c3c;">27</div>
<div style="left:598px;top:356px;width:1px;height:22px;background:#c6e4c6"></div>
<div class="t" style="left:414px;top:359px;width:184px;overflow:hidden;color:#3c3c3c;">1111</div>
<div style="left:666px;top:356px;width:1px;height:22px;background:#c6e4c6"></div>
<div class="t" style="left:599px;top:359px;width:67px;text-align:center;color:#3c3c3c;">05-06</div>
<div style="left:758px;top:356px;width:1px;height:22px;background:#c6e4c6"></div>
<div class="t" style="left:761px;top:359px;width:44px;overflow:hidden;color:#3c3c3c;">2016-01</div>
<div style="left:840px;top:356px;width:1px;height:22px;background:#c6e4c6"></div>
<div class="t" style="left:808px;top:359px;width:29px;text-align:right;color:#3c3c3c;overflow:hidden">0</div>
<div style="left:884px;top:356px;width:1px;height:22px;background:#c6e4c6"></div>
<div style="left:935px;top:356px;width:1px;height:22px;background:#c6e4c6"></div>
<div class="t" style="left:886px;top:359px;width:46px;text-align:right;color:#3c3c3c;overflow:hidden">0.0</div>
<div style="left:988px;top:356px;width:1px;height:22px;background:#c6e4c6"></div>
<div style="left:1041px;top:356px;width:1px;height:22px;background:#c6e4c6"></div>
<div style="left:1083px;top:356px;width:1px;height:22px;background:#c6e4c6"></div>
<div class="t" style="left:1043px;top:359px;width:37px;text-align:right;color:#3c3c3c;overflow:hidden">22.0</div>
<div style="left:1113px;top:356px;width:1px;height:22px;background:#c6e4c6"></div>
<div style="left:1090px;top:359px;width:16px;height:16px"><svg width="16" height="16" viewBox="0 0 16 16"><defs><linearGradient id="wg" x1="0" y1="0" x2="0" y2="1"><stop offset="0" stop-color="#6cc05c"/><stop offset="1" stop-color="#2a8428"/></linearGradient></defs><rect x=".5" y=".5" width="15" height="15" rx="3" fill="url(#wg)" stroke="#2a6a26" stroke-width="1"/><ellipse cx="6.6" cy="7" rx="4.4" ry="3.6" fill="#e8ece8" stroke="#3a6a38" stroke-width=".5"/><ellipse cx="10" cy="9.6" rx="3.6" ry="3" fill="#f8f8f8" stroke="#3a6a38" stroke-width=".5"/></svg></div>
<div style="left:1135px;top:356px;width:1px;height:22px;background:#c6e4c6"></div>
<svg style="position:absolute;left:1117px;top:360px" width="16" height="14"><path d="M1 13 L15 1" stroke="#5a7ad8" stroke-width="1"/></svg>
<div style="left:32px;top:377px;width:1103px;height:1px;background:#c6e4c6"></div>
<div style="left:7px;top:378px;width:25px;height:22px;background:#f4f8fc;border-bottom:1px solid #b8b8b8;border-right:1px solid #a0a0a0"></div>
<div class="t" style="left:7px;top:383px;width:25px;text-align:center;font-family:'Liberation Sans',sans-serif;font-size:13px;line-height:14px;color:#b8b8b8"><b>17</b></div>
<div style="left:32px;top:378px;width:1103px;height:22px;background:#ffffff"></div>
<div style="left:115px;top:378px;width:1px;height:22px;background:#c6e4c6"></div>
<div class="t" style="left:34px;top:381px;width:81px;overflow:hidden;color:#3c3c3c;">20160112-01</div>
<div style="left:173px;top:378px;width:1px;height:22px;background:#c6e4c6"></div>
<div class="t" style="left:118px;top:381px;width:55px;overflow:hidden;color:#3c3c3c;">红红</div>
<div style="left:221px;top:378px;width:1px;height:22px;background:#c6e4c6"></div>
<div class="t" style="left:176px;top:381px;width:45px;overflow:hidden;color:#3c3c3c;">尊贵级</div>
<div style="left:262px;top:378px;width:1px;height:22px;background:#c6e4c6"></div>
<div class="t" style="left:224px;top:381px;width:38px;overflow:hidden;color:#3c3c3c;">0.800</div>
<div style="left:266px;top:380px;width:14px;height:16px"><svg width="14" height="16" viewBox="0 0 14 16"><path d="M0.8 15.6 Q0.6 10.6 7 10.4 Q13.4 10.6 13.2 15.6Z" fill="#d81890"/><path d="M3.2 9.5 Q2.6 1.4 7 1.4 Q11.4 1.4 10.8 9.5z" fill="#3a2418"/><ellipse cx="7" cy="6" rx="2.5" ry="3.1" fill="#f8e0d0"/><path d="M4.4 4.6 Q7 2.6 9.6 4.6 Q7 3.6 4.4 5.4z" fill="#3a2418"/></svg></div>
<div style="left:382px;top:378px;width:1px;height:22px;background:#c6e4c6"></div>
<div class="t" style="left:296px;top:381px;width:86px;overflow:hidden;color:#3c3c3c;">13856412325</div>
<div style="left:411px;top:378px;width:1px;height:22px;background:#c6e4c6"></div>
<div style="left:598px;top:378px;width:1px;height:22px;background:#c6e4c6"></div>
<div style="left:666px;top:378px;width:1px;height:22px;background:#c6e4c6"></div>
<div style="left:758px;top:378px;width:1px;height:22px;background:#c6e4c6"></div>
<div class="t" style="left:761px;top:381px;width:44px;overflow:hidden;color:#3c3c3c;">2016-01</div>
<div style="left:840px;top:378px;width:1px;height:22px;background:#c6e4c6"></div>
<div class="t" style="left:808px;top:381px;width:29px;text-align:right;color:#3c3c3c;overflow:hidden">0</div>
<div style="left:884px;top:378px;width:1px;height:22px;background:#c6e4c6"></div>
<div style="left:935px;top:378px;width:1px;height:22px;background:#c6e4c6"></div>
<div class="t" style="left:886px;top:381px;width:46px;text-align:right;color:#3c3c3c;overflow:hidden">0.0</div>
<div style="left:988px;top:378px;width:1px;height:22px;background:#c6e4c6"></div>
<div style="left:1041px;top:378px;width:1px;height:22px;background:#c6e4c6"></div>
<div style="left:1083px;top:378px;width:1px;height:22px;background:#c6e4c6"></div>
<div class="t" style="left:1043px;top:381px;width:37px;text-align:right;color:#3c3c3c;overflow:hidden">0.0</div>
<div style="left:1113px;top:378px;width:1px;height:22px;background:#c6e4c6"></div>
<div style="left:1135px;top:378px;width:1px;height:22px;background:#c6e4c6"></div>
<svg style="position:absolute;left:1117px;top:382px" width="16" height="14"><path d="M1 13 L15 1" stroke="#5a7ad8" stroke-width="1"/></svg>
<div style="left:32px;top:399px;width:1103px;height:1px;background:#c6e4c6"></div>
<div style="left:292px;top:135px;width:2px;height:265px;background:#000"></div>
<div style="left:805px;top:135px;width:2px;height:265px;background:#000"></div>
<div style="left:1135px;top:135px;width:19px;height:265px;background:#eaeaea;border-left:1px solid #d8d8d8"></div>
<div style="left:1136px;top:135px;width:17px;height:17px;background:#f4f4f4;border:1px solid #c8c8c8"><div style="left:4px;top:5px;border-left:4px solid transparent;border-right:4px solid transparent;border-bottom:4px solid #000"></div></div>
<div style="left:1136px;top:151px;width:17px;height:83px;background:#f7f7f7;border:1px solid #e0e0e0"></div>
<div style="left:1136px;top:383px;width:17px;height:17px;background:#f4f4f4;border:1px solid #c8c8c8"><div style="left:4px;top:6px;border-left:4px solid transparent;border-right:4px solid transparent;border-top:4px solid #000"></div></div>
<div style="left:7px;top:400px;width:1128px;height:17px;background:#ececec"></div>
<div style="left:7px;top:400px;width:17px;height:17px;background:#f0f0f0;border-right:1px solid #c0c0c0"><div style="left:6px;top:4px;border-top:4px solid transparent;border-bottom:4px solid transparent;border-right:4px solid #000"></div></div>
<div style="left:25px;top:400px;width:715px;height:17px;background:#f4f4f4;border-right:1px solid #d0d0d0"></div>
<div style="left:1117px;top:400px;width:17px;height:17px;background:#f0f0f0;border-left:1px solid #d0d0d0"><div style="left:6px;top:4px;border-top:4px solid transparent;border-bottom:4px solid transparent;border-left:4px solid #000"></div></div>
<div style="left:1135px;top:400px;width:18px;height:17px;background:#efefef"></div>
<div style="left:302px;top:132px;width:234px;height:87px;background:#f0f0f0;border:1px solid #979797;box-shadow:2px 2px 2px rgba(0,0,0,.25)"></div>
<div style="left:332px;top:134px;width:1px;height:83px;background:#e0e0e0;border-right:1px solid #fff"></div>
<div style="left:334px;top:161px;width:199px;height:1px;background:#dcdcdc"></div>
<div style="left:334px;top:191px;width:199px;height:1px;background:#dcdcdc"></div>
<div style="left:305px;top:195px;width:228px;height:22px;background:linear-gradient(#f2f8fe,#dfeefc);border:1px solid #a8d2f4;border-radius:3px"></div>
<div class="t" style="left:338px;top:140px;">会员充值<span style="font-family:Liberation Sans;font-size:11px">(Y)</span></div>
<div class="t" style="left:338px;top:170px;">修改余额<span style="font-family:Liberation Sans;font-size:11px">(Z)</span></div>
<div class="t" style="left:338px;top:200px;">储值卡使用<span style="font-family:Liberation Sans;font-size:11px">IC</span>卡加密刷卡<span style="font-family:Liberation Sans;font-size:11px">(I)</span></div>
<div style="left:5px;top:417px;width:1149px;height:28px;background:#def3fe;border-top:1px solid #c8c8c8;border-bottom:1px solid #a0a0a0;border-right:1px solid #a0a0a0"></div>
<div class="t" style="left:18px;top:425px;color:#0a28f0;-webkit-text-stroke:.25px #0a28f0">合计: 17 条， 第 1 页 / 共 1 页</div>
<div class="t" style="left:879px;top:423px;color:#a8a8a8;font-family:'Liberation Sans',sans-serif">不分页</div>
<div class="t" style="left:942px;top:423px;color:#a8a8a8;font-family:'Liberation Sans',sans-serif">首页</div>
<div class="t" style="left:989px;top:423px;color:#a8a8a8;font-family:'Liberation Sans',sans-serif">上一页</div>
<div class="t" style="left:1042px;top:423px;color:#a8a8a8;font-family:'Liberation Sans',sans-serif">下一页</div>
<div class="t" style="left:1101px;top:423px;color:#a8a8a8;font-family:'Liberation Sans',sans-serif">尾页</div>
<div style="left:5px;top:444px;width:1149px;height:22px;background:#fff;border-bottom:1px solid #202020"></div>
<div class="t" style="left:17px;top:452px;">消费明细</div>
<div style="left:76px;top:447px;width:101px;height:19px;background:#f0f0f0;border:1px solid #202020;border-bottom:none"></div>
<div class="t" style="left:81px;top:452px;">储值/划账 明细</div>
<div class="t" style="left:187px;top:452px;">积分明细</div>
<div style="left:240px;top:449px;width:1px;height:14px;background:#a0a0a0"></div>
<div class="t" style="left:244px;top:452px;">跟进信息</div>
<div style="left:5px;top:466px;width:1149px;height:268px;background:#d6e2f0"></div>
<div class="t" style="left:11px;top:480px;">类型:</div>
<div style="left:45px;top:476px;width:69px;height:18px;background:#fff;border:1px solid #a9a9a9"></div>
<div style="left:95px;top:478px;width:17px;height:14px;background:#f0f0f0"><div style="left:4px;top:6px;width:0;height:0;border-left:4px solid transparent;border-right:4px solid transparent;border-top:4px solid #000"></div></div>
<div class="t" style="left:48px;top:480px;">所有</div>
<div class="t" style="left:118px;top:480px;">记录数:</div>
<div style="left:166px;top:476px;width:53px;height:18px;background:#fff;border:1px solid #a9a9a9"></div>
<div style="left:200px;top:478px;width:17px;height:14px;background:#f0f0f0"><div style="left:4px;top:6px;width:0;height:0;border-left:4px solid transparent;border-right:4px solid transparent;border-top:4px solid #000"></div></div>
<div class="t" style="left:169px;top:480px;width:30px;text-align:right">100</div>
<div class="t" style="left:231px;top:480px;">查询范围:</div>
<div style="left:294px;top:476px;width:78px;height:18px;background:#fff;border:1px solid #a9a9a9"></div>
<div style="left:353px;top:478px;width:17px;height:14px;background:#f0f0f0"><div style="left:4px;top:6px;width:0;height:0;border-left:4px solid transparent;border-right:4px solid transparent;border-top:4px solid #000"></div></div>
<div class="t" style="left:297px;top:480px;">VIP编号</div>
<div class="t" style="left:378px;top:480px;">查询内容:</div>
<div style="left:439px;top:476px;width:90px;height:18px;background:#fff;border:1px solid #a9a9a9"></div>
<div class="t" style="left:441px;top:480px;">15933662228</div>
<div class="t" style="left:548px;top:480px;">查询</div>
<div style="left:8px;top:498px;width:1144px;height:233px;background:#fff;border:1px solid #a0a0a0"></div>
<div style="left:9px;top:499px;width:1142px;height:22px;background:#c1dffa;border-bottom:1px solid #a09c98"></div>
<div style="left:33px;top:501px;width:2px;height:17px;border-left:1px solid #a0a8b0;border-right:1px solid #f4faff"></div>
<div style="left:113px;top:501px;width:2px;height:17px;border-left:1px solid #a0a8b0;border-right:1px solid #f4faff"></div>
<div class="t" style="left:37px;top:503px;color:#4a0c5a">编号</div>
<div style="left:194px;top:501px;width:2px;height:17px;border-left:1px solid #a0a8b0;border-right:1px solid #f4faff"></div>
<div class="t" style="left:117px;top:503px;color:#4a0c5a">VIP号码</div>
<div style="left:271px;top:501px;width:2px;height:17px;border-left:1px solid #a0a8b0;border-right:1px solid #f4faff"></div>
<div class="t" style="left:198px;top:503px;color:#4a0c5a">操作类型</div>
<div style="left:363px;top:501px;width:2px;height:17px;border-left:1px solid #a0a8b0;border-right:1px solid #f4faff"></div>
<div class="t" style="left:275px;top:503px;color:#4a0c5a">VIP名称</div>
<div style="left:452px;top:501px;width:2px;height:17px;border-left:1px solid #a0a8b0;border-right:1px solid #f4faff"></div>
<div class="t" style="left:367px;top:503px;color:#4a0c5a">支付金额</div>
<div style="left:678px;top:501px;width:2px;height:17px;border-left:1px solid #a0a8b0;border-right:1px solid #f4faff"></div>
<div class="t" style="left:456px;top:503px;color:#4a0c5a">摘要</div>
<div style="left:752px;top:501px;width:2px;height:17px;border-left:1px solid #a0a8b0;border-right:1px solid #f4faff"></div>
<div class="t" style="left:682px;top:503px;color:#4a0c5a">充值</div>
<div style="left:820px;top:501px;width:2px;height:17px;border-left:1px solid #a0a8b0;border-right:1px solid #f4faff"></div>
<div class="t" style="left:756px;top:503px;color:#4a0c5a">划账消费</div>
<div style="left:904px;top:501px;width:2px;height:17px;border-left:1px solid #a0a8b0;border-right:1px solid #f4faff"></div>
<div class="t" style="left:824px;top:503px;color:#4a0c5a">卡内余额</div>
<div style="left:1045px;top:501px;width:2px;height:17px;border-left:1px solid #a0a8b0;border-right:1px solid #f4faff"></div>
<div class="t" style="left:908px;top:503px;color:#4a0c5a">记录时间</div>
<div class="t" style="left:1049px;top:503px;color:#4a0c5a">操作人</div>
<div style="left:9px;top:521px;width:25px;height:20px;background:#084b7a;border-right:1px solid #a0a0a0;border-bottom:1px solid #d0d0d0"></div>
<div class="t" style="left:9px;top:524px;width:24px;text-align:center;font-family:'Liberation Sans',sans-serif;font-size:14px;line-height:14px;color:#000"><b>1</b></div>
<div style="left:34px;top:521px;width:1117px;height:20px;background:#c3e2fa;border-bottom:1px solid #c6e4c6"></div>
<div style="left:113px;top:521px;width:1px;height:20px;background:#c6e4c6"></div>
<div class="t" style="left:36px;top:523px;">11</div>
<div style="left:194px;top:521px;width:1px;height:20px;background:#c6e4c6"></div>
<div class="t" style="left:116px;top:523px;">15933662228</div>
<div style="left:271px;top:521px;width:1px;height:20px;background:#c6e4c6"></div>
<div class="t" style="left:197px;top:523px;">充值</div>
<div style="left:363px;top:521px;width:1px;height:20px;background:#c6e4c6"></div>
<div class="t" style="left:274px;top:523px;">梁小惠</div>
<div style="left:452px;top:521px;width:1px;height:20px;background:#c6e4c6"></div>
<div style="left:678px;top:521px;width:1px;height:20px;background:#c6e4c6"></div>
<div class="t" style="left:455px;top:523px;">[赠送充值]&nbsp;&nbsp;赠送充值：200.00</div>
<div style="left:752px;top:521px;width:1px;height:20px;background:#c6e4c6"></div>
<div class="t" style="left:679px;top:523px;width:70px;text-align:right;">200.00</div>
<div style="left:820px;top:521px;width:1px;height:20px;background:#c6e4c6"></div>
<div class="t" style="left:753px;top:523px;width:64px;text-align:right;">0.00</div>
<div style="left:904px;top:521px;width:1px;height:20px;background:#c6e4c6"></div>
<div class="t" style="left:821px;top:523px;width:80px;text-align:right;">1000.00</div>
<div style="left:1045px;top:521px;width:1px;height:20px;background:#c6e4c6"></div>
<div class="t" style="left:905px;top:523px;width:140px;text-align:center;">2016-01-27 18:13:43</div>
<div class="t" style="left:1048px;top:523px;">Superuser</div>
<div style="left:9px;top:541px;width:25px;height:20px;background:#f4f8fc;border-right:1px solid #a0a0a0;border-bottom:1px solid #d0d0d0"></div>
<div class="t" style="left:9px;top:544px;width:24px;text-align:center;font-family:'Liberation Sans',sans-serif;font-size:14px;line-height:14px;color:#c0c0c0"><b>2</b></div>
<div style="left:34px;top:541px;width:1117px;height:20px;background:#f6fbff;border-bottom:1px solid #c6e4c6"></div>
<div style="left:113px;top:541px;width:1px;height:20px;background:#c6e4c6"></div>
<div class="t" style="left:36px;top:543px;">10</div>
<div style="left:194px;top:541px;width:1px;height:20px;background:#c6e4c6"></div>
<div class="t" style="left:116px;top:543px;">15933662228</div>
<div style="left:271px;top:541px;width:1px;height:20px;background:#c6e4c6"></div>
<div class="t" style="left:197px;top:543px;">充值</div>
<div style="left:363px;top:541px;width:1px;height:20px;background:#c6e4c6"></div>
<div class="t" style="left:274px;top:543px;">梁小惠</div>
<div style="left:452px;top:541px;width:1px;height:20px;background:#c6e4c6"></div>
<div class="t" style="left:364px;top:543px;width:85px;text-align:right;">800.00</div>
<div style="left:678px;top:541px;width:1px;height:20px;background:#c6e4c6"></div>
<div class="t" style="left:455px;top:543px;">充值：1000.00&nbsp;&nbsp;付款:800.00</div>
<div style="left:752px;top:541px;width:1px;height:20px;background:#c6e4c6"></div>
<div class="t" style="left:679px;top:543px;width:70px;text-align:right;">800.00</div>
<div style="left:820px;top:541px;width:1px;height:20px;background:#c6e4c6"></div>
<div class="t" style="left:753px;top:543px;width:64px;text-align:right;">0.00</div>
<div style="left:904px;top:541px;width:1px;height:20px;background:#c6e4c6"></div>
<div class="t" style="left:821px;top:543px;width:80px;text-align:right;">800.00</div>
<div style="left:1045px;top:541px;width:1px;height:20px;background:#c6e4c6"></div>
<div class="t" style="left:905px;top:543px;width:140px;text-align:center;">2016-01-27 18:13:43</div>
<div class="t" style="left:1048px;top:543px;">Superuser</div>
<div style="left:9px;top:707px;width:1142px;height:23px;background:#fbfbfb;border-top:1px solid #a0a0a0"></div>
<div style="left:9px;top:708px;width:24px;height:22px;background:#f0f8ff;border-right:1px solid #a0a0a0"></div>
<div style="left:364px;top:709px;width:88px;height:20px;border-top:1px solid #a0a0a0;border-left:1px solid #a0a0a0"></div>
<div class="t" style="left:364px;top:713px;width:85px;text-align:right;color:#800000">800.00</div>
<div style="left:680px;top:709px;width:72px;height:20px;border-top:1px solid #a0a0a0;border-left:1px solid #a0a0a0"></div>
<div class="t" style="left:680px;top:713px;width:69px;text-align:right;color:#800000">1000</div>
<div style="left:754px;top:709px;width:66px;height:20px;border-top:1px solid #a0a0a0;border-left:1px solid #a0a0a0"></div>
<div class="t" style="left:754px;top:713px;width:63px;text-align:right;color:#800000">0.00</div>
<div style="left:821px;top:709px;width:83px;height:20px;border-top:1px solid #a0a0a0;border-left:1px solid #a0a0a0"></div>
<div class="t" style="left:824px;top:713px;color:#800000">1800.00</div>
<div style="left:1153px;top:54px;width:1px;height:680px;background:#a0a0a0"></div>
<div style="left:1155px;top:32px;width:118px;height:701px;background:linear-gradient(#234670,#3a6ea4 40%,#3e78b0 73%,#407cb6);border:1px solid #5a5a5a;box-shadow:-1px -1px 0 #f0ece4"></div>
<div style="left:1157px;top:33px;width:114px;height:25px;background:#fff;border:2px solid #3a7ac0;border-radius:8px;box-shadow:inset 0 -1px 0 #d8e4f0"></div>
<div class="t" style="left:1157px;top:40px;width:114px;text-align:center;color:#222;font-family:'Liberation Sans',sans-serif;font-size:13px;letter-spacing:1px">日常业务</div>
<div style="left:1202px;top:68px;width:24px;height:24px"><svg width="24" height="24" viewBox="0 0 24 24"><rect x=".5" y=".5" width="23" height="23" rx="4" fill="#2a8ac8"/><rect x=".5" y=".5" width="23" height="11" rx="4" fill="#58b0e0"/><rect x="4" y="9" width="3.5" height="11" fill="#fff"/><circle cx="5.7" cy="5.5" r="2" fill="#fff"/><path d="M10 9h3.3v1.5q1.2-1.8 3.5-1.8 3.5 0 3.5 4v7.3h-3.5v-6.5q0-2-1.5-2t-1.8 2v6.5h-3.5z" fill="#fff"/></svg></div>
<div class="t" style="left:1155px;top:103px;width:117px;text-align:center;color:#fff">采购进货管理</div>
<div style="left:1202px;top:132px;width:24px;height:24px"><svg width="24" height="24" viewBox="0 0 24 24"><path d="M3 4l5-3h8l5 3v19h-18z" fill="#f2f2f2" stroke="#c8c8c8" stroke-width=".6"/><path d="M10 1h4l-1 3h-2z" fill="#303850"/><path d="M11 4h2l1.2 16-2.2 3-2.2-3z" fill="#1a2a90"/></svg></div>
<div class="t" style="left:1155px;top:167px;width:117px;text-align:center;color:#fff">销售出库管理</div>
<div style="left:1202px;top:195px;width:24px;height:24px"><svg width="24" height="24" viewBox="0 0 24 24"><path d="M2 11.5 L13 24 L23 16 L21.5 14.5 L12.5 21.5 L3.5 10Z" fill="#a8d010"/><path d="M3 10 L12.5 21.5 L22.5 14 L22 12 L12 19.5 L3.5 8.5Z" fill="#f4f4f4"/><path d="M2 6 L13.2 0.6 L23 11.3 L10.4 18.8Z" fill="#1e8ef0"/><path d="M13.2 0.6 L23 11.3 L16 15 L7 3.4Z" fill="#28a8f8" opacity=".6"/></svg></div>
<div class="t" style="left:1155px;top:230px;width:117px;text-align:center;color:#fff">销售订单管理</div>
<div style="left:1202px;top:260px;width:24px;height:24px"><svg width="24" height="24" viewBox="0 0 24 24"><rect x=".5" y=".5" width="23" height="23" rx="3" fill="#f27a1a"/><rect x="2" y="2" width="20" height="20" rx="2" fill="none" stroke="#fff" stroke-width="1"/><path d="M5 7l1.5 1.5 2.5-3M5 12l1.5 1.5 2.5-3M5 17l1.5 1.5 2.5-3" stroke="#fff" stroke-width="1.4" fill="none"/><path d="M11 7h8M11 12h8M11 17h8" stroke="#fff" stroke-width="1.8"/></svg></div>
<div class="t" style="left:1155px;top:295px;width:117px;text-align:center;color:#fff">库存调拨管理</div>
<div style="left:1202px;top:324px;width:24px;height:24px"><svg width="24" height="24" viewBox="0 0 24 24"><rect x="2" y="1" width="17" height="22" fill="#f8e8a0" stroke="#d0a040" stroke-width=".8"/><path d="M5 6h11M5 9h11M5 12h11M5 15h8" stroke="#c09040" stroke-width="1"/><path d="M13 21l8-8 2 2-8 8h-2z" fill="#e08030"/></svg></div>
<div class="t" style="left:1155px;top:359px;width:117px;text-align:center;color:#fff">库存变动登记</div>
<div style="left:1202px;top:388px;width:24px;height:24px"><svg width="24" height="24" viewBox="0 0 24 24"><path d="M0.8 23.5 Q1.5 17 12.3 16.5 Q23 17 23.8 23.5Z" fill="#f4f4f4" stroke="#0a0a0a" stroke-width="1.3"/><rect x="11" y="17" width="2.6" height="6.5" fill="#1a5ab8"/><ellipse cx="3" cy="11" rx="2" ry="2.5" fill="#f0b860" stroke="#111" stroke-width=".8"/><ellipse cx="21.5" cy="11" rx="2" ry="2.5" fill="#f0b860" stroke="#111" stroke-width=".8"/><ellipse cx="12.3" cy="11.5" rx="8" ry="7" fill="#f8d0a0" stroke="#111" stroke-width=".8"/><path d="M3.5 10 Q3 1 12 1.5 Q19 1 21 5 L21 10 Q18 6.5 12 7 Q6 6.5 3.5 10Z" fill="#1a1a1a"/><path d="M7 4 Q12 2.5 17 4" stroke="#505050" stroke-width="1.2" fill="none"/></svg></div>
<div class="t" style="left:1155px;top:423px;width:117px;text-align:center;color:#fff">VIP 会员管理</div>
<div style="left:1157px;top:577px;width:113px;height:22px;background:linear-gradient(#fff,#fff 70%,#eef2f6);border-radius:8px 7px 9px 6px;box-shadow:0 1px 0 #244a80"></div>
<div class="t" style="left:1157px;top:581px;width:113px;text-align:center;color:#1e1e1e;font-family:'Liberation Sans',sans-serif;letter-spacing:1px">批发管理</div>
<div style="left:1157px;top:603px;width:113px;height:22px;background:linear-gradient(#fff,#fff 70%,#eef2f6);border-radius:8px 7px 9px 6px;box-shadow:0 1px 0 #244a80"></div>
<div class="t" style="left:1157px;top:607px;width:113px;text-align:center;color:#1e1e1e;font-family:'Liberation Sans',sans-serif;letter-spacing:1px">其他业务</div>
<div style="left:1157px;top:629px;width:113px;height:22px;background:linear-gradient(#fff,#fff 70%,#eef2f6);border-radius:8px 7px 9px 6px;box-shadow:0 1px 0 #244a80"></div>
<div class="t" style="left:1157px;top:633px;width:113px;text-align:center;color:#1e1e1e;font-family:'Liberation Sans',sans-serif;letter-spacing:1px">扩展业务</div>
<div style="left:1157px;top:655px;width:113px;height:22px;background:linear-gradient(#fff,#fff 70%,#eef2f6);border-radius:8px 7px 9px 6px;box-shadow:0 1px 0 #244a80"></div>
<div class="t" style="left:1157px;top:659px;width:113px;text-align:center;color:#1e1e1e;font-family:'Liberation Sans',sans-serif;letter-spacing:1px">统计分析</div>
<div style="left:1157px;top:681px;width:113px;height:22px;background:linear-gradient(#fff,#fff 70%,#eef2f6);border-radius:8px 7px 9px 6px;box-shadow:0 1px 0 #244a80"></div>
<div class="t" style="left:1157px;top:685px;width:113px;text-align:center;color:#1e1e1e;font-family:'Liberation Sans',sans-serif;letter-spacing:1px">基础信息</div>
<div style="left:1157px;top:707px;width:113px;height:22px;background:linear-gradient(#fff,#fff 70%,#eef2f6);border-radius:8px 7px 9px 6px;box-shadow:0 1px 0 #244a80"></div>
<div class="t" style="left:1157px;top:711px;width:113px;text-align:center;color:#1e1e1e;font-family:'Liberation Sans',sans-serif;letter-spacing:1px">系统设定</div>
<div style="left:7px;top:734px;width:1266px;height:27px;background:#2157a0"></div>
<div style="left:21px;top:740px;width:16px;height:16px"><svg width="14" height="16" viewBox="0 0 14 16"><rect x="0" y="5" width="4" height="6" fill="#e8e8e8"/><path d="M4 5l6-5v16l-6-5z" fill="#f8c810"/><path d="M12 6.5h2M12 9.5h2" stroke="#f0a000"/></svg></div>
<div class="t" style="left:40px;top:741px;color:#fff;font-family:'Liberation Sans',sans-serif">公告</div>
<div style="left:85px;top:740px;width:16px;height:16px"><svg width="16" height="14" viewBox="0 0 16 14"><path d="M3 2h10l1 6h-12z" fill="#404040"/><rect x="5" y="3" width="6" height="3" fill="#90b090"/><rect x="0" y="9" width="16" height="4" fill="#f0f0f0" stroke="#909090" stroke-width=".6"/></svg></div>
<div class="t" style="left:105px;top:741px;color:#fff;font-family:'Liberation Sans',sans-serif">开钱箱</div>
<div style="left:157px;top:740px;width:16px;height:16px"><svg width="16" height="16" viewBox="0 0 16 16"><path d="M5 1h6v6h4l-7 7-7-7h4z" fill="#40c040"/><rect x="1" y="13" width="14" height="2" fill="#f0f0f0"/></svg></div>
<div class="t" style="left:176px;top:741px;color:#fff;font-family:'Liberation Sans',sans-serif">离线下载</div>
<div style="left:242px;top:740px;width:16px;height:16px"><svg width="12" height="16" viewBox="0 0 12 16"><rect x=".5" y=".5" width="11" height="15" fill="#b0c8d8" stroke="#506070"/><rect x="2" y="2" width="8" height="3" fill="#e0f0f0"/><path d="M2.5 7h7M2.5 9.5h7M2.5 12h7" stroke="#405060" stroke-dasharray="1.5 1"/></svg></div>
<div class="t" style="left:260px;top:741px;color:#fff;font-family:'Liberation Sans',sans-serif">计算器</div>
<div style="left:319px;top:740px;width:16px;height:16px"><svg width="16" height="16" viewBox="0 0 16 16"><rect x="1" y="7" width="7" height="7" fill="#e04020"/><rect x="8" y="8" width="7" height="7" fill="#40a030"/><rect x="4" y="1" width="8" height="7" fill="#f0a020"/></svg></div>
<div class="t" style="left:338px;top:741px;color:#fff;font-family:'Liberation Sans',sans-serif">商品浏览</div>
<div style="left:412px;top:740px;width:16px;height:16px"><svg width="16" height="16" viewBox="0 0 16 16"><rect x="0" y="0" width="16" height="16" rx="3" fill="#f28a20"/><rect x="4" y="7" width="8" height="6" fill="#fff"/><path d="M5.5 7v-2q0-2.5 2.5-2.5t2.5 2.5v2" stroke="#fff" stroke-width="1.5" fill="none"/></svg></div>
<div class="t" style="left:431px;top:741px;color:#fff;font-family:'Liberation Sans',sans-serif">锁屏</div>
<div class="t" style="left:1013px;top:743px;color:#ffff40">系统管理员</div>
<div style="left:1077px;top:742px;width:1px;height:13px;background:#ffff40"></div>
<div class="t" style="left:1094px;top:742px;color:#fff">密码</div>
<div style="left:1137px;top:742px;width:1px;height:13px;background:#ffff40"></div>
<svg style="position:absolute;left:1151px;top:740px" width="17" height="17" viewBox="0 0 17 17"><circle cx="11" cy="6" r="5" fill="#f0b030"/><circle cx="12" cy="5" r="1.3" fill="#c07010"/><path d="M8 9 L1 16 M3 14l2 2M5 12l2 2" stroke="#f0b030" stroke-width="2.4"/></svg>
<div class="t" style="left:1168px;top:743px;color:#fff">注销</div>
<div style="left:1208px;top:742px;width:1px;height:13px;background:#ffff40"></div>
<div class="t" style="left:1223px;top:741px;color:#fff;font-family:'Liberation Sans',sans-serif">窗口(2)</div>
<div style="left:0px;top:766px;width:1280px;height:1px;background:#2a3a50"></div>
<div style="left:0px;top:767px;width:1280px;height:1px;background:#e8ecf0"></div>
<div style="left:200px;top:767px;width:515px;height:1px;background:#fff;border-left:1px solid #303030"></div></body></html>
